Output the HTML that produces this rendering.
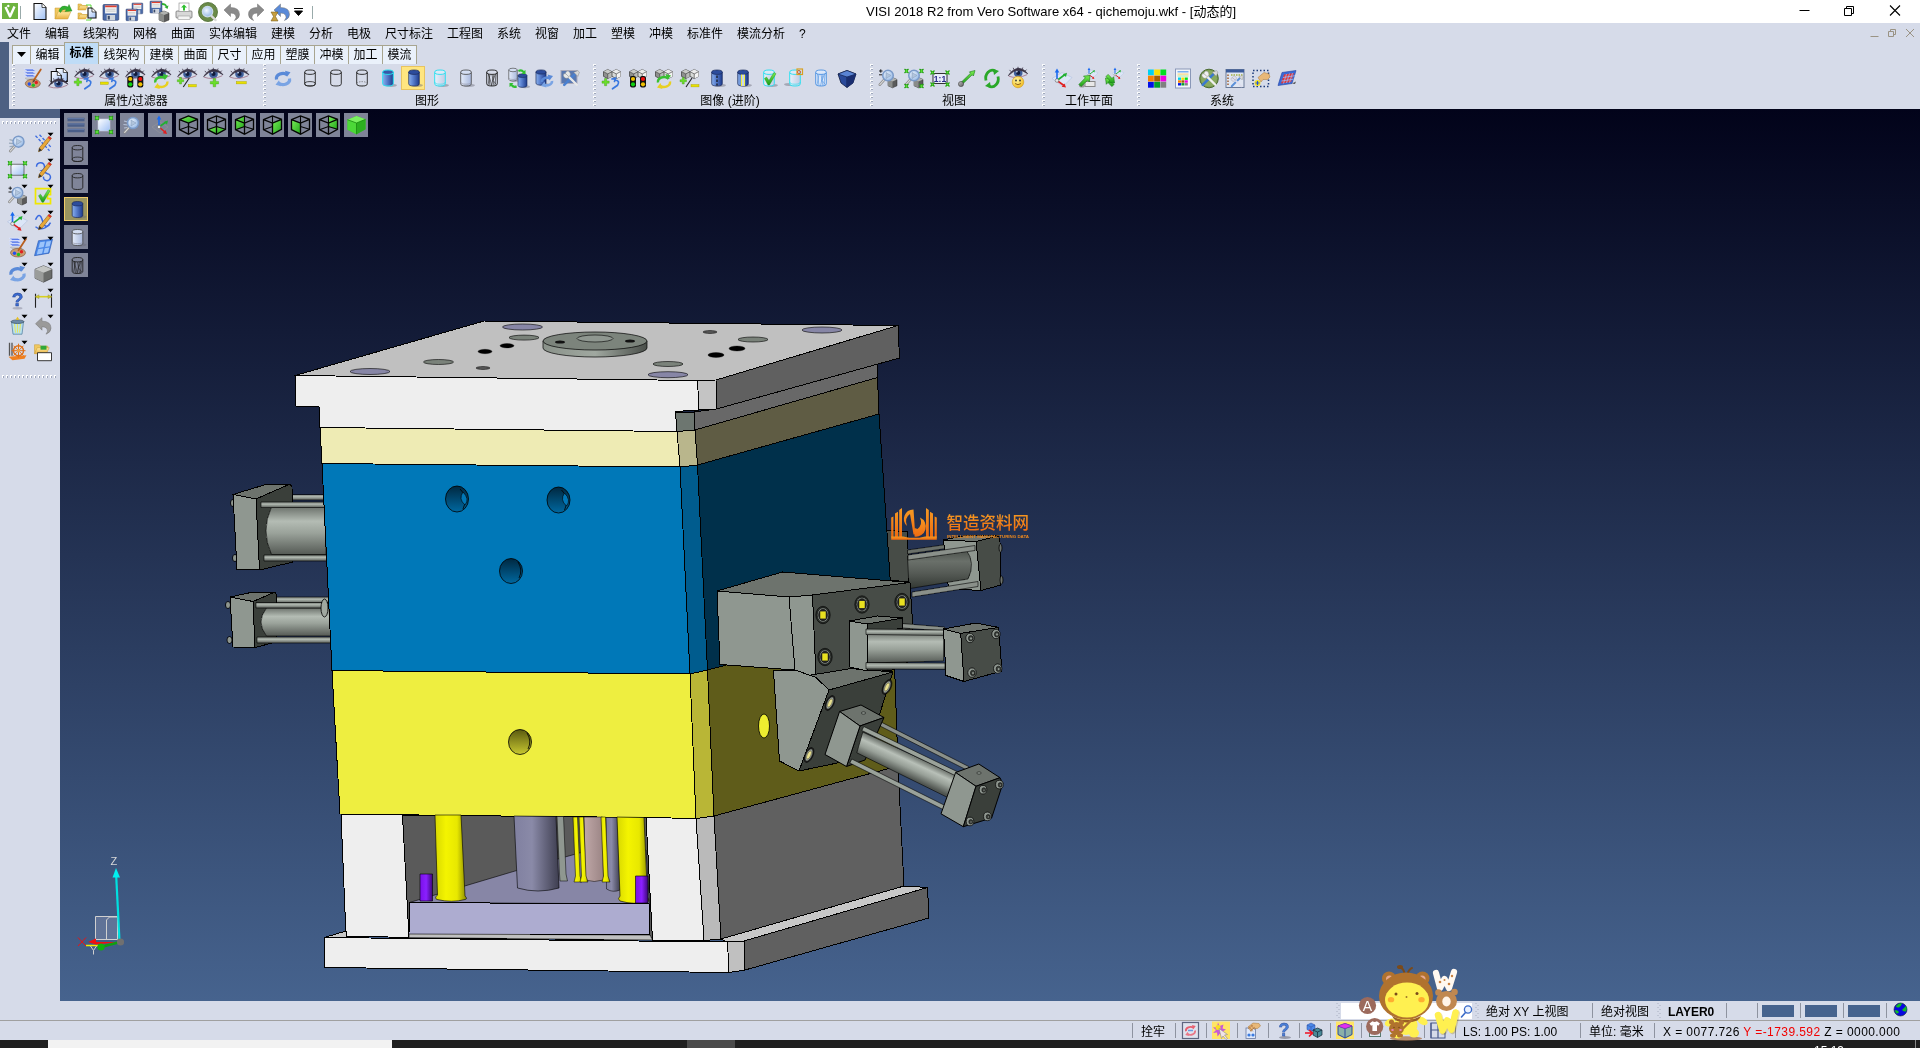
<!DOCTYPE html>
<html lang="zh-CN">
<head>
<meta charset="utf-8">
<title>VISI 2018 R2 from Vero Software x64 - qichemoju.wkf - [动态的]</title>
<style>
html,body{margin:0;padding:0}
body{width:1920px;height:1048px;overflow:hidden;position:relative;background:#d6dbe9;
 font-family:"Liberation Sans","Noto Sans CJK SC",sans-serif;font-size:12px;color:#000}
.abs{position:absolute}
#titlebar{position:absolute;left:0;top:0;width:1920px;height:23px;background:#fff}
#title{position:absolute;left:866px;top:4px;font-size:13px;line-height:16px;white-space:nowrap;color:#000;letter-spacing:0.03px}
#menubar{position:absolute;left:0;top:23px;width:1920px;height:20px;background:#d6dbe9}
#menubar span{position:absolute;top:2.5px;line-height:16px;font-size:12px;white-space:nowrap}
#darkstrip{position:absolute;left:0;top:42px;width:60px;height:76px;background:#4d6082}
#ribbon{position:absolute;left:9px;top:42px;width:1911px;height:67px;background:#d6dbe9}
.tab{position:absolute;top:45px;height:19px;box-sizing:border-box;border:1px solid #a8a590;border-bottom:none;background:#eaf1fb;
 font-size:12px;line-height:16px;text-align:center;white-space:nowrap;padding-top:.5px}
.tab.sel{top:42px;height:22px;background:#bfdcf7;font-weight:bold;padding-top:1.5px;border-color:#a8a590}
.grip{position:absolute;top:64px;width:3px;height:43px;
 background-image:repeating-linear-gradient(to bottom,#fff 0,#fff 2px,transparent 2px,transparent 4px);opacity:.9}
.grip:after{content:"";position:absolute;left:1px;top:1px;width:2px;height:43px;
 background-image:repeating-linear-gradient(to bottom,#9aa3b8 0,#9aa3b8 1px,transparent 1px,transparent 4px);}
.glabel{position:absolute;top:94px;font-size:12px;line-height:15px;white-space:nowrap;transform:translateX(-50%)}
#viewport{position:absolute;left:60px;top:109px;width:1860px;height:892px;
 background:linear-gradient(to bottom,#02031a 0%,#46638e 100%)}
#leftbar{position:absolute;left:0;top:118px;width:60px;height:883px;background:#d6dbe9}
.hgrip{position:absolute;left:2px;width:56px;height:3px;
 background-image:repeating-linear-gradient(to right,#fff 0,#fff 2px,transparent 2px,transparent 4px)}
.hgrip:after{content:"";position:absolute;left:1px;top:1px;width:56px;height:2px;
 background-image:repeating-linear-gradient(to right,#9aa3b8 0,#9aa3b8 1px,transparent 1px,transparent 4px)}
#status1,#status2{position:absolute;left:0;width:1920px;background:#d6dbe9}
#status1{top:1001px;height:19px}
#status2{top:1020px;height:20px;border-top:1px solid #a0a0a0;box-sizing:border-box}
.st{position:absolute;font-size:12px;line-height:15px;white-space:nowrap}
.vsep{position:absolute;width:1px;background:#8e93a0}
#taskbar{position:absolute;left:0;top:1040px;width:1920px;height:8px;background:#1f1f1f}
.vbtn{position:absolute;width:24px;height:24px;background:#7f8499;box-sizing:border-box}
svg{position:absolute;overflow:visible}
</style>
</head>
<body>
<div id="titlebar"></div>
<div id="title">VISI 2018 R2 from Vero Software x64 - qichemoju.wkf - [动态的]</div>
<div id="menubar">
<span style="left:7px">文件</span>
<span style="left:45px">编辑</span>
<span style="left:83px">线架构</span>
<span style="left:133px">网格</span>
<span style="left:171px">曲面</span>
<span style="left:209px">实体编辑</span>
<span style="left:271px">建模</span>
<span style="left:309px">分析</span>
<span style="left:347px">电极</span>
<span style="left:385px">尺寸标注</span>
<span style="left:447px">工程图</span>
<span style="left:497px">系统</span>
<span style="left:535px">视窗</span>
<span style="left:573px">加工</span>
<span style="left:611px">塑模</span>
<span style="left:649px">冲模</span>
<span style="left:687px">标准件</span>
<span style="left:737px">模流分析</span>
<span style="left:799px">?</span>
</div>
<div id="darkstrip"></div><div id="ribbon"></div>
<div class="tab" style="left:12px;width:19px"><svg style="left:4px;top:6px" width="9" height="5"><path d="M0 0h9l-4.5 5z" fill="#000"/></svg></div>
<div class="tab" style="left:30px;width:35px">编辑</div>
<div class="tab sel" style="left:64px;width:35px">标准</div>
<div class="tab" style="left:98px;width:47px">线架构</div>
<div class="tab" style="left:144px;width:35px">建模</div>
<div class="tab" style="left:178px;width:35px">曲面</div>
<div class="tab" style="left:212px;width:35px">尺寸</div>
<div class="tab" style="left:246px;width:35px">应用</div>
<div class="tab" style="left:280px;width:35px">塑膜</div>
<div class="tab" style="left:314px;width:35px">冲模</div>
<div class="tab" style="left:348px;width:35px">加工</div>
<div class="tab" style="left:382px;width:35px">模流</div>
<div class="grip" style="left:12px"></div>
<div class="grip" style="left:263px"></div>
<div class="grip" style="left:593px"></div>
<div class="grip" style="left:870px"></div>
<div class="grip" style="left:1042px"></div>
<div class="grip" style="left:1137px"></div>
<div class="glabel" style="left:136px">属性/过滤器</div>
<div class="glabel" style="left:427px">图形</div>
<div class="glabel" style="left:730px">图像 (进阶)</div>
<div class="glabel" style="left:954px">视图</div>
<div class="glabel" style="left:1089px">工作平面</div>
<div class="glabel" style="left:1222px">系统</div>
<svg style="left:0;top:0" width="1920" height="44" viewBox="0 0 1920 44" fill="none" stroke="#000" stroke-width="1">
<path d="M1799.5 10.5h10" />
<path d="M1844.5 8.5h7v7h-7z M1846.5 8.5v-2h7v7h-2" />
<path d="M1890 5.5l10 10 M1900 5.5l-10 10" stroke-width="1.1"/>
<g stroke="#9a9384"><path d="M1870.5 36.5h8"/><path d="M1888.5 31.500h5v5h-5z M1890.5 31.5v-2h5v5h-2"/><path d="M1906 29l8 8 M1914 29l-8 8"/></g>
</svg>
<div id="viewport"></div>
<div id="leftbar"><div class="hgrip" style="top:3px"></div><div class="hgrip" style="top:257px"></div></div>
<div id="status1"></div><div id="status2"></div>
<div class="abs" style="left:1341px;top:1003px;width:131px;height:16px;background:#fff"></div>
<div class="st" style="left:1486px;top:1005px">绝对 XY 上视图</div>
<div class="st" style="left:1601px;top:1005px">绝对视图</div>
<div class="st" style="left:1668px;top:1005px;font-weight:bold">LAYER0</div>
<div class="vsep" style="left:1592px;top:1003px;height:15px"></div>
<div class="vsep" style="left:1726px;top:1003px;height:15px"></div>
<div class="vsep" style="left:1757px;top:1003px;height:15px"></div>
<div class="vsep" style="left:1800px;top:1003px;height:15px"></div>
<div class="vsep" style="left:1843px;top:1003px;height:15px"></div>
<div class="vsep" style="left:1886px;top:1003px;height:15px"></div>
<div class="abs" style="left:1762px;top:1005px;width:32px;height:12px;background:#46638e"></div>
<div class="abs" style="left:1805px;top:1005px;width:32px;height:12px;background:#46638e"></div>
<div class="abs" style="left:1848px;top:1005px;width:32px;height:12px;background:#46638e"></div>
<div class="st" style="left:1141px;top:1025px">拴牢</div>
<div class="st" style="left:1463px;top:1025px">LS: 1.00 PS: 1.00</div>
<div class="st" style="left:1589px;top:1025px">单位: 毫米</div>
<div class="st" style="left:1663px;top:1025px;letter-spacing:.42px">X = 0077.726 <span style="color:#f00000">Y =-1739.592</span> Z = 0000.000</div>
<div class="vsep" style="left:1132px;top:1023px;height:15px"></div>
<div class="vsep" style="left:1175px;top:1023px;height:15px"></div>
<div class="vsep" style="left:1206px;top:1023px;height:15px"></div>
<div class="vsep" style="left:1237px;top:1023px;height:15px"></div>
<div class="vsep" style="left:1268px;top:1023px;height:15px"></div>
<div class="vsep" style="left:1299px;top:1023px;height:15px"></div>
<div class="vsep" style="left:1330px;top:1023px;height:15px"></div>
<div class="vsep" style="left:1361px;top:1023px;height:15px"></div>
<div class="vsep" style="left:1424px;top:1023px;height:15px"></div>
<div class="vsep" style="left:1455px;top:1023px;height:15px"></div>
<div class="vsep" style="left:1580px;top:1023px;height:15px"></div>
<div class="vsep" style="left:1654px;top:1023px;height:15px"></div>
<div id="taskbar"><div class="abs" style="left:48px;top:0;width:344px;height:8px;background:#f2f2f2"></div><div class="abs" style="left:687px;top:0;width:48px;height:8px;background:#4a4a4a"></div><div class="abs" style="left:1814px;top:5.5px;color:#fff;font-size:12px;line-height:11px">15:19</div><div class="abs" style="left:1915px;top:0;width:1px;height:8px;background:#888"></div></div>
<svg style="left:0;top:0" width="1920" height="1048" viewBox="0 0 1920 1048" stroke-linejoin="round">
<defs>
<linearGradient id="cylV" x1="0" y1="0" x2="0" y2="1"><stop offset="0" stop-color="#6c726c"/><stop offset=".3" stop-color="#b4bcb4"/><stop offset=".55" stop-color="#9aa29a"/><stop offset="1" stop-color="#555a55"/></linearGradient>
<linearGradient id="cylVd" x1="0" y1="0" x2="0" y2="1"><stop offset="0" stop-color="#4a4f4a"/><stop offset=".3" stop-color="#6a706a"/><stop offset=".6" stop-color="#565b56"/><stop offset="1" stop-color="#333833"/></linearGradient>
<linearGradient id="rodV" x1="0" y1="0" x2="0" y2="1"><stop offset="0" stop-color="#7a807a"/><stop offset=".4" stop-color="#b0b8b0"/><stop offset="1" stop-color="#5a5f5a"/></linearGradient>
<linearGradient id="pilY" x1="0" y1="0" x2="1" y2="0"><stop offset="0" stop-color="#d8d800"/><stop offset=".35" stop-color="#f4f400"/><stop offset=".7" stop-color="#e8e800"/><stop offset="1" stop-color="#8a8a00"/></linearGradient>
<linearGradient id="pilG" x1="0" y1="0" x2="1" y2="0"><stop offset="0" stop-color="#8080a0"/><stop offset=".4" stop-color="#8a8aa8"/><stop offset="1" stop-color="#3e3e50"/></linearGradient>
<linearGradient id="pilP" x1="0" y1="0" x2="1" y2="0"><stop offset="0" stop-color="#7a10e8"/><stop offset=".5" stop-color="#8a20ff"/><stop offset="1" stop-color="#3c0878"/></linearGradient>
<linearGradient id="pilK" x1="0" y1="0" x2="1" y2="0"><stop offset="0" stop-color="#c0a8a8"/><stop offset="1" stop-color="#9a8484"/></linearGradient>
<linearGradient id="holeB" x1="0" y1="0" x2="0" y2="1"><stop offset="0" stop-color="#002840"/><stop offset="1" stop-color="#0068a0"/></linearGradient>
<linearGradient id="holeY" x1="0" y1="0" x2="0" y2="1"><stop offset="0" stop-color="#5a5a10"/><stop offset="1" stop-color="#c8c830"/></linearGradient>
<linearGradient id="flg" x1="0" y1="0" x2="1" y2="0"><stop offset="0" stop-color="#8a928a"/><stop offset=".5" stop-color="#a0a8a0"/><stop offset="1" stop-color="#4a4f4a"/></linearGradient>
<linearGradient id="logoG" x1="0" y1="0" x2="0" y2="1"><stop offset="0" stop-color="#f59a23"/><stop offset="1" stop-color="#ee6a10"/></linearGradient>
</defs>
<g shape-rendering="crispEdges">
<rect x="286" y="494.5" width="38" height="5.5" fill="url(#rodV)" stroke="#000" stroke-width=".6"/>
<polygon points="256,499 290,484 292,487 293,562 259.5,570" fill="#3a3f3a" stroke="#000" stroke-width="1" />
<polygon points="233,494.5 264,485 290,484 256,499" fill="#6d736d" stroke="#000" stroke-width="1" />
<path d="M271.5 507H326V554.5H271.5Q260.5 530.75 271.5 507z" fill="url(#cylV)" stroke="#000" stroke-width=".6"/>
<rect x="261" y="502" width="64" height="5.5" fill="url(#rodV)" stroke="#000" stroke-width=".6"/>
<rect x="264" y="555" width="63" height="6" fill="url(#rodV)" stroke="#000" stroke-width=".6"/>
<ellipse cx="233" cy="503" rx="2.5" ry="3.5" fill="#8f9790" stroke="#000" stroke-width="0.8" />
<ellipse cx="235" cy="558" rx="2.5" ry="3.5" fill="#8f9790" stroke="#000" stroke-width="0.8" />
<polygon points="233,494.5 256,499 259.5,570 237,569.5" fill="#8f9790" stroke="#000" stroke-width="1" />
<rect x="272" y="597" width="58" height="6" fill="url(#rodV)" stroke="#000" stroke-width=".6"/>
<polygon points="253,601.5 275,592 276.5,595 276,642 255,647.5" fill="#3a3f3a" stroke="#000" stroke-width="1" />
<polygon points="230,597 248.5,593 275,592 253,601.5" fill="#6d736d" stroke="#000" stroke-width="1" />
<path d="M266.5 608H332V636H266.5Q255.5 622.0 266.5 608z" fill="url(#cylV)" stroke="#000" stroke-width=".6"/>
<rect x="256" y="602.5" width="75" height="5.5" fill="url(#rodV)" stroke="#000" stroke-width=".6"/>
<rect x="257" y="637" width="76" height="6" fill="url(#rodV)" stroke="#000" stroke-width=".6"/>
<ellipse cx="228" cy="605" rx="2.5" ry="3.5" fill="#8f9790" stroke="#000" stroke-width="0.8" />
<ellipse cx="229.5" cy="640" rx="2.5" ry="3.5" fill="#8f9790" stroke="#000" stroke-width="0.8" />
<polygon points="230,597 253,601.5 255,647.5 233,647" fill="#8f9790" stroke="#000" stroke-width="1" />
<ellipse cx="324.5" cy="608" rx="3.5" ry="9" fill="#a0a8a0" stroke="#000" stroke-width="0.8" />
<polygon points="886,530 907.5,532 909,582 888,580" fill="#474c47" stroke="#000" stroke-width="1" />
<polygon points="907.5,550 950,544 950,548 907.5,554" fill="#6a706a" stroke="#000" stroke-width="0.6" />
<polygon points="943.5,540 976,541.5 981,590.5 948.5,588.7" fill="#8f9790" stroke="#000" stroke-width="1" />
<path d="M907.500 556L966 549.500Q976 563 968 579L909 588.700z" fill="url(#cylVd)" stroke="#000" stroke-width=".6"/>
<polygon points="908,555 975,545.5 975,550.5 908,560" fill="#8a908a" stroke="#000" stroke-width="0.6" />
<polygon points="912,592 978,581.5 978,586.5 912,597" fill="#8a908a" stroke="#000" stroke-width="0.6" />
<polygon points="943.5,540 968,535 998.5,536 976,541.5" fill="#6d736d" stroke="#000" stroke-width="1" />
<polygon points="976,541.5 998.5,536 1000,542 1001,585 981,590.5" fill="#474c47" stroke="#000" stroke-width="1" />
<ellipse cx="1000.5" cy="548" rx="1.5" ry="4" fill="#6d736d" stroke="#000" stroke-width="0.8" />
<ellipse cx="1001.5" cy="580" rx="1.5" ry="4" fill="#6d736d" stroke="#000" stroke-width="0.8" />
<polygon points="694,412 716.5,409 877.5,364 877.5,377.5 695,430" fill="#686868" stroke="#000" stroke-width="1" />
<polygon points="295,375.5 484,321 898,325.5 716,380 697.5,380.5" fill="#c0c0c0" stroke="#000" stroke-width="1" />
<polygon points="716,380 898,325.5 899.5,358 716.5,409" fill="#606060" stroke="#000" stroke-width="1" />
<polygon points="697.5,380.5 716,380 716.5,409 699,410" fill="#c4c4c4" stroke="#000" stroke-width="1" />
<polygon points="295,375.5 697.5,380.5 699,410 675.5,411.5 677,431.5 320,427.5 319,407 296,406" fill="#eeeeee" stroke="#000" stroke-width="1" />
<polygon points="675.5,412 694,412 695,430 677,431.5" fill="#6d7670" stroke="#000" stroke-width="1" />
<polygon points="320,427.5 677,431.5 680,467 322,463.5" fill="#eeebb4" stroke="#000" stroke-width="1" />
<polygon points="677,431.5 695,430 697.5,465 680,467" fill="#b9b68c" stroke="#000" stroke-width="1" />
<polygon points="695,430 877.5,377.5 879,414 697.5,465" fill="#5f5c44" stroke="#000" stroke-width="1" />
<polygon points="322,463.5 680,467 690,674 332,670.5" fill="#0078b8" stroke="#000" stroke-width="1" />
<polygon points="680,467 697.5,465 707.5,670 690,674" fill="#005c8e" stroke="#000" stroke-width="1" />
<polygon points="697.5,465 879,414 893,621 707.5,670" fill="#00304b" stroke="#000" stroke-width="1" />
<polygon points="332,670.5 690,674 696,818.5 340,814" fill="#eeee40" stroke="#000" stroke-width="1" />
<polygon points="690,674 707.5,670 714,816 696,818.5" fill="#b9b636" stroke="#000" stroke-width="1" />
<polygon points="707.5,670 893,621 898,766 714,816" fill="#5f5c1a" stroke="#000" stroke-width="1" />
<polygon points="714,816 898,766 904,886 721,939" fill="#606060" stroke="#000" stroke-width="1" />
<polygon points="402.5,815 646,817.5 652.5,940 409,937.5" fill="#5a5a5a" stroke="#000" stroke-width="1" />
</g>
<g>
<polygon points="409.5,902.5 515,871 590,850 646,850 649.5,904" fill="#8786a6" stroke="#000" stroke-width="0.6" />
<path d="M606 817.500L617.5 817.500L620 890Q613 893 606.500 889z" fill="url(#pilG)" stroke="#000" stroke-width=".5"/>
<path d="M584 817L602.500 817L603.500 880Q594 883 585.500 880z" fill="url(#pilK)" stroke="#000" stroke-width=".5"/>
<path d="M557 816.500L563.500 816.500L566 874L567.500 881L560 881L559.500 874z" fill="#8f9790" stroke="#000" stroke-width=".5"/>
<path d="M573 817L577.5 817L580 876L582 882L574 882L575.5 876z" fill="url(#pilY)" stroke="#000" stroke-width=".5"/>
<path d="M579 817L583.5 817L586 876L588 882L580 882L581.5 876z" fill="url(#pilY)" stroke="#000" stroke-width=".5"/>
<path d="M601 817L605.5 817L608 876L610 882L602 882L603.5 876z" fill="url(#pilY)" stroke="#000" stroke-width=".5"/>
<path d="M514 816L556 816.500L559 888Q538 894 517.500 888z" fill="url(#pilG)" stroke="#000" stroke-width=".6"/>
<path d="M435 815L461 815L465 896Q468 899 465 899.500Q452 903 437 899.500Q434 898 437.500 895z" fill="url(#pilY)" stroke="#000" stroke-width=".6"/>
<path d="M617 817L644 817.500L647.500 897Q650 901 647.500 902Q634 905 620 901Q617 899 620 896z" fill="url(#pilY)" stroke="#000" stroke-width=".6"/>
<rect x="420" y="874" width="12.500" height="27" fill="url(#pilP)" stroke="#000" stroke-width=".6"/>
<rect x="635.500" y="876" width="12.500" height="27" fill="url(#pilP)" stroke="#000" stroke-width=".6"/>
</g>
<g shape-rendering="crispEdges">
<polygon points="409.5,902.5 649.5,904 650,935 409,934" fill="#adacd0" stroke="#000" stroke-width="1" />
<polygon points="409,934 650,935 652.5,940 409,937.5" fill="#c0c0c0" stroke="#000" stroke-width="0.6" />
<polygon points="341,814 402.5,815 409,937.5 346,936" fill="#eeeeee" stroke="#000" stroke-width="1" />
<polygon points="646,817.5 696,818.5 704,940.5 652.5,940" fill="#eeeeee" stroke="#000" stroke-width="1" />
<polygon points="696,818.5 714,816 721,939 704,940.5" fill="#bababa" stroke="#000" stroke-width="1" />
<polygon points="721,939 904,886 927.5,887.5 744,941 726,941.5" fill="#c8c8c8" stroke="#000" stroke-width="1" />
<polygon points="324.5,937.5 346,931 346,937.7" fill="#c8c8c8" stroke="#000" stroke-width="1" />
<polygon points="324.5,937.5 727.5,942 729,972.5 325,967.5" fill="#eeeeee" stroke="#000" stroke-width="1" />
<polygon points="727.5,942 744,941 745,970 729,972.5" fill="#c0c0c0" stroke="#000" stroke-width="1" />
<polygon points="744,941 927.5,887.5 929,918 745,970" fill="#606060" stroke="#000" stroke-width="1" />
</g>
<g>
<ellipse cx="457" cy="499" rx="11.5" ry="13" fill="url(#holeB)" stroke="#000" stroke-width="0.8" />
<path d="M460 489q9 8 3 20" fill="none" stroke="#000" stroke-width=".8"/>
<path d="M463 492q-5 7 2 13q5 -6 -2 -13z" fill="#0078b8" stroke="#000" stroke-width=".6"/>
<ellipse cx="558.5" cy="500" rx="11.5" ry="13" fill="url(#holeB)" stroke="#000" stroke-width="0.8" />
<path d="M561.5 490q9 8 3 20" fill="none" stroke="#000" stroke-width=".8"/>
<path d="M564.5 493q-5 7 2 13q5 -6 -2 -13z" fill="#0078b8" stroke="#000" stroke-width=".6"/>
<ellipse cx="511" cy="571" rx="11.5" ry="12.5" fill="url(#holeB)" stroke="#000" stroke-width="0.8" />
<path d="M518 562q5 8 1 16" fill="none" stroke="#000" stroke-width=".8"/>
<ellipse cx="520" cy="742" rx="11.5" ry="12.5" fill="url(#holeY)" stroke="#000" stroke-width="0.8" />
<path d="M527 733q5 8 1 16" fill="none" stroke="#000" stroke-width=".8"/>
<ellipse cx="764" cy="726" rx="5.5" ry="12" fill="#eeee30" stroke="#000" stroke-width="0.8" />
<ellipse cx="522.5" cy="327" rx="20" ry="3" fill="#8786a6" stroke="#000" stroke-width="0.6" />
<ellipse cx="370" cy="371.5" rx="20" ry="3" fill="#8786a6" stroke="#000" stroke-width="0.6" />
<ellipse cx="822" cy="330" rx="20" ry="3" fill="#8786a6" stroke="#000" stroke-width="0.6" />
<ellipse cx="668" cy="374.7" rx="20" ry="3" fill="#8786a6" stroke="#000" stroke-width="0.6" />
<ellipse cx="524" cy="337.6" rx="15" ry="2.5" fill="#7a827a" stroke="#000" stroke-width="0.6" />
<ellipse cx="438.5" cy="362" rx="15" ry="2.5" fill="#7a827a" stroke="#000" stroke-width="0.6" />
<ellipse cx="753" cy="339.5" rx="15" ry="2.5" fill="#7a827a" stroke="#000" stroke-width="0.6" />
<ellipse cx="668" cy="364" rx="15" ry="2.5" fill="#7a827a" stroke="#000" stroke-width="0.6" />
<ellipse cx="507" cy="345.7" rx="7" ry="2.2" fill="#000" stroke="#000" stroke-width="0.3" />
<ellipse cx="485" cy="351.5" rx="7" ry="2.2" fill="#000" stroke="#000" stroke-width="0.3" />
<ellipse cx="737" cy="348.5" rx="8" ry="2.5" fill="#000" stroke="#000" stroke-width="0.3" />
<ellipse cx="716" cy="355" rx="8" ry="2.5" fill="#000" stroke="#000" stroke-width="0.3" />
<ellipse cx="483" cy="368" rx="7" ry="1.5" fill="#555" stroke="#000" stroke-width="0.5" />
<ellipse cx="710" cy="332" rx="7" ry="1.5" fill="#555" stroke="#000" stroke-width="0.5" />
<path d="M543 341v7a52 9 0 0 0 104 0v-7z" fill="url(#flg)" stroke="#000" stroke-width=".7"/>
<ellipse cx="595" cy="341" rx="52" ry="9" fill="#7c847c" stroke="#000" stroke-width="0.7" />
<ellipse cx="595" cy="338.5" rx="18" ry="3.5" fill="#8f9790" stroke="#000" stroke-width="0.6" />
<ellipse cx="560" cy="342" rx="5" ry="1.6" fill="#111" stroke="#000" stroke-width="0" />
<ellipse cx="630" cy="341" rx="5" ry="1.6" fill="#111" stroke="#000" stroke-width="0" />
</g>
<g shape-rendering="crispEdges">
<polygon points="717,591 782.5,572 910,582.5 812.5,595 789,597" fill="#6d736d" stroke="#000" stroke-width="1" />
<polygon points="717,591 789,597 795,670 720,664.5" fill="#8f9790" stroke="#000" stroke-width="1" />
<polygon points="789,597 812.5,595 816,677.5 795,670" fill="#8f9790" stroke="#000" stroke-width="1" />
<polygon points="812.5,595 910,582.5 912.5,622 912,660 892.5,670 816,677.5" fill="#474c47" stroke="#000" stroke-width="1" />
<polygon points="805,676 851,668.6 893,672 829,690" fill="#6d736d" stroke="#000" stroke-width="1" />
<polygon points="773.4,670 795,670 816,677.5 829,690 799,771 779.5,761" fill="#8f9790" stroke="#000" stroke-width="1" />
<polygon points="829,690 893,672 866,757 799,771" fill="#3a3f3a" stroke="#000" stroke-width="1" />
</g><g>
<ellipse cx="823" cy="615" rx="7.2" ry="8.7" fill="#2c302c" stroke="#000" stroke-width="0.6" />
<ellipse cx="823" cy="615" rx="5.8" ry="7.3" fill="#8f9790" stroke="#000" stroke-width="0.6" />
<ellipse cx="823" cy="615" rx="4.5" ry="6.0" fill="#222" stroke="#000" stroke-width="0.4" />
<rect x="820.25" y="611.425" width="5.5" height="7.15" fill="#e8e020"/>
<ellipse cx="862" cy="604.5" rx="7.2" ry="8.7" fill="#2c302c" stroke="#000" stroke-width="0.6" />
<ellipse cx="862" cy="604.5" rx="5.8" ry="7.3" fill="#8f9790" stroke="#000" stroke-width="0.6" />
<ellipse cx="862" cy="604.5" rx="4.5" ry="6.0" fill="#222" stroke="#000" stroke-width="0.4" />
<rect x="859.25" y="600.925" width="5.5" height="7.15" fill="#e8e020"/>
<ellipse cx="902" cy="602" rx="7.2" ry="8.7" fill="#2c302c" stroke="#000" stroke-width="0.6" />
<ellipse cx="902" cy="602" rx="5.8" ry="7.3" fill="#8f9790" stroke="#000" stroke-width="0.6" />
<ellipse cx="902" cy="602" rx="4.5" ry="6.0" fill="#222" stroke="#000" stroke-width="0.4" />
<rect x="899.25" y="598.425" width="5.5" height="7.15" fill="#e8e020"/>
<ellipse cx="825" cy="657" rx="7.2" ry="8.7" fill="#2c302c" stroke="#000" stroke-width="0.6" />
<ellipse cx="825" cy="657" rx="5.8" ry="7.3" fill="#8f9790" stroke="#000" stroke-width="0.6" />
<ellipse cx="825" cy="657" rx="4.5" ry="6.0" fill="#222" stroke="#000" stroke-width="0.4" />
<rect x="822.25" y="653.425" width="5.5" height="7.15" fill="#e8e020"/>
<g transform="rotate(25 830 703)">
<ellipse cx="830" cy="703" rx="4" ry="8" fill="#222" stroke="#000" stroke-width="0.5" />
<ellipse cx="830" cy="703" rx="3" ry="6.5" fill="#9aa29a" stroke="#000" stroke-width="0.4" />
<ellipse cx="830" cy="703" rx="1.8" ry="4.5" fill="#e8e090" stroke="#000" stroke-width="0.3" />
</g>
<g transform="rotate(25 887 687)">
<ellipse cx="887" cy="687" rx="4" ry="8" fill="#222" stroke="#000" stroke-width="0.5" />
<ellipse cx="887" cy="687" rx="3" ry="6.5" fill="#9aa29a" stroke="#000" stroke-width="0.4" />
<ellipse cx="887" cy="687" rx="1.8" ry="4.5" fill="#e8e090" stroke="#000" stroke-width="0.3" />
</g>
<g transform="rotate(25 809 755)">
<ellipse cx="809" cy="755" rx="4" ry="8" fill="#222" stroke="#000" stroke-width="0.5" />
<ellipse cx="809" cy="755" rx="3" ry="6.5" fill="#9aa29a" stroke="#000" stroke-width="0.4" />
<ellipse cx="809" cy="755" rx="1.8" ry="4.5" fill="#e8e090" stroke="#000" stroke-width="0.3" />
</g>
</g><g shape-rendering="crispEdges">
<polygon points="896,623 944.5,627 944.5,631 896,627.5" fill="#8a908a" stroke="#000" stroke-width="0.6" />
<polygon points="849,621 877.5,616 902.5,618 867.5,624" fill="#6d736d" stroke="#000" stroke-width="1" />
<polygon points="867.5,624 902.5,618 903,628 868,634" fill="#3a3f3a" stroke="#000" stroke-width="1" />
<path d="M866 634Q858 648 867 663L943.500 661L943.500 632.500z" fill="url(#cylV)" stroke="#000" stroke-width=".6"/>
<polygon points="849,621 867.5,624 867.5,671 850,667" fill="#8f9790" stroke="#000" stroke-width="1" />
<polygon points="866,629 943.5,630 943.5,635.5 866,634.5" fill="url(#rodV)" stroke="#000" stroke-width="0.6" />
<polygon points="866,662.5 945,663 945,669.5 866,669" fill="url(#rodV)" stroke="#000" stroke-width="0.6" />
<polygon points="943.5,629 976,623 998.5,627.4 960.7,633.4" fill="#6d736d" stroke="#000" stroke-width="1" />
<polygon points="943.5,629 960.7,633.4 964,681.5 946,675.5" fill="#8f9790" stroke="#000" stroke-width="1" />
<polygon points="960.7,633.4 998.5,627.4 1002,671 964,681.5" fill="#474c47" stroke="#000" stroke-width="1" />
</g><g>
<ellipse cx="970" cy="638" rx="4.2" ry="4.7" fill="#8f9790" stroke="#000" stroke-width="0.7" />
<ellipse cx="970.8" cy="638.3" rx="2.4000000000000004" ry="2.7" fill="#3a3f3a" stroke="#000" stroke-width="0.5" />
<ellipse cx="971" cy="638.5" rx="1.2000000000000002" ry="1.4000000000000004" fill="#9aa29a" stroke="#000" stroke-width="0.3" />
<ellipse cx="996" cy="634" rx="4.2" ry="4.7" fill="#8f9790" stroke="#000" stroke-width="0.7" />
<ellipse cx="996.8" cy="634.3" rx="2.4000000000000004" ry="2.7" fill="#3a3f3a" stroke="#000" stroke-width="0.5" />
<ellipse cx="997" cy="634.5" rx="1.2000000000000002" ry="1.4000000000000004" fill="#9aa29a" stroke="#000" stroke-width="0.3" />
<ellipse cx="972" cy="672.6" rx="4.2" ry="4.7" fill="#8f9790" stroke="#000" stroke-width="0.7" />
<ellipse cx="972.8" cy="672.9" rx="2.4000000000000004" ry="2.7" fill="#3a3f3a" stroke="#000" stroke-width="0.5" />
<ellipse cx="973" cy="673.1" rx="1.2000000000000002" ry="1.4000000000000004" fill="#9aa29a" stroke="#000" stroke-width="0.3" />
<ellipse cx="997.7" cy="668.6" rx="4.2" ry="4.7" fill="#8f9790" stroke="#000" stroke-width="0.7" />
<ellipse cx="998.5" cy="668.9" rx="2.4000000000000004" ry="2.7" fill="#3a3f3a" stroke="#000" stroke-width="0.5" />
<ellipse cx="998.7" cy="669.1" rx="1.2000000000000002" ry="1.4000000000000004" fill="#9aa29a" stroke="#000" stroke-width="0.3" />
</g><g>
<linearGradient id="rodD" gradientUnits="userSpaceOnUse" x1="0" y1="0" x2="-2" y2="4.500" spreadMethod="reflect"><stop offset="0" stop-color="#b0b8b0"/><stop offset="1" stop-color="#5a5f5a"/></linearGradient>
<polygon points="877.1,724.5 967.1,770.2 968.9,766.6 878.9,720.9" fill="#8a908a" stroke="#000" stroke-width="0.6" />
<polygon points="839.6,711.5 861,705 884,717.5 860,726" fill="#6d736d" stroke="#000" stroke-width="1" />
<polygon points="860,726 884,717.5 878,731 865,760 846.5,766.5" fill="#3a3f3a" stroke="#000" stroke-width="1" />
<linearGradient id="cylD" gradientUnits="userSpaceOnUse" x1="905" y1="752" x2="896" y2="771.500"><stop offset="0" stop-color="#6c726c"/><stop offset=".3" stop-color="#b8c0b8"/><stop offset=".6" stop-color="#98a098"/><stop offset="1" stop-color="#505550"/></linearGradient>
<polygon points="862.8,732 955.5,775 947.8,797.5 856.8,752.8" fill="url(#cylD)" stroke="#000" stroke-width="0.6" />
<polygon points="861.8,730.5 956.0,776.0 958.0,772.0 863.8,726.5" fill="#9aa29a" stroke="#000" stroke-width="0.6" />
<polygon points="849.8,763.0 943.0,809.5 945.0,805.5 851.8,759.0" fill="#9aa29a" stroke="#000" stroke-width="0.6" />
<polygon points="839.6,711.5 860,726 846.5,766.5 825,754.5" fill="#8f9790" stroke="#000" stroke-width="1" />
<ellipse cx="863.5" cy="713" rx="2.2" ry="1.2" fill="#8f9790" stroke="#000" stroke-width="0.5" />
<polygon points="955.6,772.5 978.8,764 1000,777.7 976,786.3" fill="#6d736d" stroke="#000" stroke-width="1" />
<polygon points="955.6,772.5 976,786.3 963.3,826.7 941,813.8" fill="#8f9790" stroke="#000" stroke-width="1" />
<polygon points="976,786.3 1000,777.7 1002.8,783.7 991.6,818 963.3,826.7" fill="#3a3f3a" stroke="#000" stroke-width="1" />
<ellipse cx="979" cy="773" rx="2.2" ry="1.2" fill="#8f9790" stroke="#000" stroke-width="0.5" />
<ellipse cx="983" cy="789.7" rx="3.8" ry="4.3" fill="#8f9790" stroke="#000" stroke-width="0.7" />
<ellipse cx="983.8" cy="790.0" rx="1.9999999999999998" ry="2.3" fill="#3a3f3a" stroke="#000" stroke-width="0.5" />
<ellipse cx="984" cy="790.2" rx="0.7999999999999998" ry="1.0" fill="#9aa29a" stroke="#000" stroke-width="0.3" />
<ellipse cx="999.4" cy="784.6" rx="3.8" ry="4.3" fill="#8f9790" stroke="#000" stroke-width="0.7" />
<ellipse cx="1000.1999999999999" cy="784.9" rx="1.9999999999999998" ry="2.3" fill="#3a3f3a" stroke="#000" stroke-width="0.5" />
<ellipse cx="1000.4" cy="785.1" rx="0.7999999999999998" ry="1.0" fill="#9aa29a" stroke="#000" stroke-width="0.3" />
<ellipse cx="970" cy="821.5" rx="3.8" ry="4.3" fill="#8f9790" stroke="#000" stroke-width="0.7" />
<ellipse cx="970.8" cy="821.8" rx="1.9999999999999998" ry="2.3" fill="#3a3f3a" stroke="#000" stroke-width="0.5" />
<ellipse cx="971" cy="822.0" rx="0.7999999999999998" ry="1.0" fill="#9aa29a" stroke="#000" stroke-width="0.3" />
<ellipse cx="987.4" cy="816.4" rx="3.8" ry="4.3" fill="#8f9790" stroke="#000" stroke-width="0.7" />
<ellipse cx="988.1999999999999" cy="816.6999999999999" rx="1.9999999999999998" ry="2.3" fill="#3a3f3a" stroke="#000" stroke-width="0.5" />
<ellipse cx="988.4" cy="816.9" rx="0.7999999999999998" ry="1.0" fill="#9aa29a" stroke="#000" stroke-width="0.3" />
</g>
<g fill="url(#logoG)" stroke="none">
<path d="M891.200 517.500l2.200-1v21h-2.200zM895 513.500l3-1.800v25.800h-3zM899.200 510l2.800-2v29.500h-2.800z"/>
<path d="M936.800 517.500l-2.200-1v21h2.200zM933 513.500l-3-1.800v25.800h3zM928.800 510l-2.800-2v29.500h2.800z"/>
<path d="M891.200 536.500h12l6 1.200h10l6-1.200h11.600v3.200h-45.600z"/>
<path d="M913.500 509.600a9.500 9.500 0 0 0 -6.500 16.500q-3-8 3-12l3.500 20.500q4 0 6.500-3l-5-.5z"/>
<path d="M914.500 536.600a10 10 0 0 0 5.500-19q3 7-2.500 11.500l-3-1z"/>
</g>
<text x="946.500" y="528.800" font-family="'Liberation Sans','Noto Sans CJK SC',sans-serif" font-weight="500" font-size="17.500" fill="url(#logoG)" textLength="82.500" lengthAdjust="spacingAndGlyphs">智造资料网</text>
<text x="947" y="537.900" font-family="'Liberation Sans',sans-serif" font-weight="bold" font-size="4.400" fill="#f08a1d" textLength="82" lengthAdjust="spacingAndGlyphs">INTELLIGENT MANUFACTURING DATA</text>
<g>
<rect x="95.500" y="916.500" width="22" height="23" fill="#7a86a8" fill-opacity=".55" stroke="#d0d0d0" stroke-width="1"/>
<path d="M106.500 939v-19l3-3h8" fill="none" stroke="#d0d0d0" stroke-width="1"/>
<path d="M86 945.500h12" stroke="#f0f000" stroke-width="1.500"/>
<path d="M120 942l-24 0l0-3.500l-8 3.500l8 2.500z" fill="#f01010"/>
<path d="M120 942l-19 5" stroke="#10a010" stroke-width="2.500"/>
<circle cx="101" cy="947" r="3.600" fill="#10b010"/>
<path d="M119.500 941L116.200 876" stroke="#00e0e0" stroke-width="2.200"/>
<path d="M116 868l4 9.500h-7.500z" fill="#00f0f0"/>
<circle cx="120.500" cy="942" r="3.600" fill="#707070"/>
<text x="110.500" y="865" font-family="'Liberation Sans',sans-serif" font-size="11" fill="#d8d8d8">Z</text>
<path d="M78 937.500l8 8.500M86 937.500l-8 8.500" stroke="#f01010" stroke-width="1"/>
<path d="M90.500 946l3 4.500l3-4.500M93.500 950.500v4" stroke="#d0d0d0" stroke-width="1" fill="none"/>
</g>
</svg>
<svg style="left:0;top:0" width="1920" height="1048" viewBox="0 0 1920 1048">
<defs>
<linearGradient id="gcb" x1="0" y1="0" x2="1" y2="0"><stop offset="0" stop-color="#8ab0ea"/><stop offset=".35" stop-color="#5f86d4"/><stop offset="1" stop-color="#1c3a8c"/></linearGradient>
<linearGradient id="gcl" x1="0" y1="0" x2="1" y2="0"><stop offset="0" stop-color="#e4ecfa"/><stop offset="1" stop-color="#a8b8dc"/></linearGradient>
<linearGradient id="gcc" x1="0" y1="0" x2="1" y2="0"><stop offset="0" stop-color="#e8f0fa"/><stop offset="1" stop-color="#c0cce4"/></linearGradient>
<linearGradient id="gdoc" x1="0" y1="0" x2="1" y2="1"><stop offset="0" stop-color="#ffffff"/><stop offset="1" stop-color="#9fc0f4"/></linearGradient>
<radialGradient id="glens" cx=".4" cy=".4" r=".7"><stop offset="0" stop-color="#f0f6ff"/><stop offset="1" stop-color="#8ab0e0"/></radialGradient>
<linearGradient id="gfold" x1="0" y1="0" x2="0" y2="1"><stop offset="0" stop-color="#ffe9a0"/><stop offset="1" stop-color="#e8b040"/></linearGradient>
<linearGradient id="ggreen" x1="0" y1="0" x2="0" y2="1"><stop offset="0" stop-color="#7aee50"/><stop offset="1" stop-color="#1a9a18"/></linearGradient>
<linearGradient id="ggreen2" x1="0" y1="0" x2="1" y2="1"><stop offset="0" stop-color="#78ec58"/><stop offset="1" stop-color="#24a81c"/></linearGradient>
<linearGradient id="ggray" x1="0" y1="0" x2="1" y2="1"><stop offset="0" stop-color="#c0c0c0"/><stop offset="1" stop-color="#5a5a5a"/></linearGradient>
<radialGradient id="gsmile" cx=".4" cy=".35" r=".7"><stop offset="0" stop-color="#fff6a0"/><stop offset="1" stop-color="#f0b818"/></radialGradient>
</defs>
<g transform="translate(22.299999999999997 68.5) scale(1)"><path d="M1.500 .5h9l3.500 2.300h-9zM1.500 3.300h9l3.500 2.300h-9zM1.500 6.100h9l3.500 2.300h-9z" fill="#5a7ae8" stroke="#dfe6ff" stroke-width=".7"/><path d="M3 9.500h10l1.500 1.500h-10z" fill="#d8d8d8" stroke="#888" stroke-width=".4"/>
<ellipse cx="10.500" cy="15" rx="7.500" ry="4.300" fill="#c89a70" stroke="#7a5030" stroke-width=".6"/><circle cx="7" cy="15.500" r="1.700" fill="#2050f0"/><circle cx="11" cy="16.800" r="1.700" fill="#20c020"/><circle cx="14" cy="14" r="1.700" fill="#e02020"/>
<path d="M18.500 1L11 12.500" stroke="#b86020" stroke-width="1.800" stroke-linecap="round"/><path d="M11.800 11l-2 3.500l3-2z" fill="#444"/></g>
<g transform="translate(48.3 68.5) scale(1)"><path d="M8 0h7l4 4v9h-11z" fill="url(#gdoc)" stroke="#111" stroke-width="1.100"/><path d="M15 0v4h4" fill="#fff" stroke="#111" stroke-width=".7"/><path d="M3 3h6l4 4v8h-10z" fill="url(#gdoc)" stroke="#111" stroke-width="1.100"/><path d="M9 3v4h4" fill="#fff" stroke="#111" stroke-width=".7"/><g transform="translate(0 9.5) scale(1)"><path d="M.3 8.200Q9.500 -1 19.700 6.500Q15 10.800 9.500 10.300Q4 10.300 .3 8.200z" fill="#d4dbe8"/>
<circle cx="10.200" cy="5.400" r="4.300" fill="#40609c"/><circle cx="10.200" cy="5.400" r="2.100" fill="#121c3c"/><circle cx="8.700" cy="4" r="1" fill="#c8d8f0"/>
<path d="M.3 8.200Q4 2 10 .8Q16 1 19.700 6.300Q15 2.600 10 2.800Q5 3.200 .3 8.200z" fill="#3a3244" stroke="#3a3244" stroke-width=".7"/><path d="M3 4.200l-1.400-1.800M6 2.300l-.8-2M10 1.300V-.7M14 2l.8-2M17 3.700l1.500-1.600" stroke="#3a3244" stroke-width=".8"/>
<path d="M.8 8.700Q9 11.800 19 7.200" fill="none" stroke="#a87a90" stroke-width=".9"/></g></g>
<g transform="translate(74.3 68.5) scale(1)"><g transform="translate(0 0) scale(1)"><path d="M.3 8.200Q9.500 -1 19.700 6.500Q15 10.800 9.500 10.300Q4 10.300 .3 8.200z" fill="#d4dbe8"/>
<circle cx="10.200" cy="5.400" r="4.300" fill="#40609c"/><circle cx="10.200" cy="5.400" r="2.100" fill="#121c3c"/><circle cx="8.700" cy="4" r="1" fill="#c8d8f0"/>
<path d="M.3 8.200Q4 2 10 .8Q16 1 19.700 6.300Q15 2.600 10 2.800Q5 3.200 .3 8.200z" fill="#3a3244" stroke="#3a3244" stroke-width=".7"/><path d="M3 4.200l-1.400-1.800M6 2.300l-.8-2M10 1.300V-.7M14 2l.8-2M17 3.700l1.500-1.600" stroke="#3a3244" stroke-width=".8"/>
<path d="M.8 8.700Q9 11.800 19 7.200" fill="none" stroke="#a87a90" stroke-width=".9"/></g><path d="M0 12.5h2.5v-2.5h2.2v2.5h2.5v2.2h-2.5v2.5h-2.2v-2.5h-2.5z" fill="#6adf2a" stroke="#3e9a10" stroke-width=".4"/><path d="M10 10.5l3.500 -.8l-1 3.200M13 11.3q5.500 1 2.500 5.500l-5 3.500" fill="none" stroke="#3a78e0" stroke-width="1.700" stroke-linecap="round"/></g>
<g transform="translate(99.3 68.5) scale(1)"><g transform="translate(0 0) scale(1)"><path d="M.3 8.200Q9.500 -1 19.700 6.500Q15 10.800 9.500 10.300Q4 10.300 .3 8.200z" fill="#d4dbe8"/>
<circle cx="10.200" cy="5.400" r="4.300" fill="#40609c"/><circle cx="10.200" cy="5.400" r="2.100" fill="#121c3c"/><circle cx="8.700" cy="4" r="1" fill="#c8d8f0"/>
<path d="M.3 8.200Q4 2 10 .8Q16 1 19.700 6.300Q15 2.600 10 2.800Q5 3.200 .3 8.200z" fill="#3a3244" stroke="#3a3244" stroke-width=".7"/><path d="M3 4.200l-1.400-1.800M6 2.300l-.8-2M10 1.300V-.7M14 2l.8-2M17 3.700l1.500-1.600" stroke="#3a3244" stroke-width=".8"/>
<path d="M.8 8.700Q9 11.800 19 7.200" fill="none" stroke="#a87a90" stroke-width=".9"/></g><rect x="1" y="13.5" width="8" height="2.400" fill="#e8e000" stroke="#a8a000" stroke-width=".4"/><path d="M10 10.5l3.500 -.8l-1 3.200M13 11.3q5.500 1 2.500 5.500l-5 3.500" fill="none" stroke="#3a78e0" stroke-width="1.700" stroke-linecap="round"/></g>
<g transform="translate(125.30000000000001 68.5) scale(1)"><g transform="translate(0 0) scale(1)"><path d="M.3 8.200Q9.500 -1 19.700 6.500Q15 10.800 9.500 10.300Q4 10.300 .3 8.200z" fill="#d4dbe8"/>
<circle cx="10.200" cy="5.400" r="4.300" fill="#40609c"/><circle cx="10.200" cy="5.400" r="2.100" fill="#121c3c"/><circle cx="8.700" cy="4" r="1" fill="#c8d8f0"/>
<path d="M.3 8.200Q4 2 10 .8Q16 1 19.700 6.300Q15 2.600 10 2.800Q5 3.200 .3 8.200z" fill="#3a3244" stroke="#3a3244" stroke-width=".7"/><path d="M3 4.200l-1.400-1.800M6 2.300l-.8-2M10 1.300V-.7M14 2l.8-2M17 3.700l1.500-1.600" stroke="#3a3244" stroke-width=".8"/>
<path d="M.8 8.700Q9 11.800 19 7.200" fill="none" stroke="#a87a90" stroke-width=".9"/></g><rect x="2" y="7.5" width="6" height="11.500" rx="2" fill="#111"/><circle cx="5" cy="10.5" r="2.100" fill="#f0c000"/><circle cx="5" cy="15.8" r="2.100" fill="#10d010"/><rect x="12" y="7.5" width="6" height="11.500" rx="2" fill="#111"/><circle cx="15" cy="10.5" r="2.100" fill="#f01010"/><circle cx="15" cy="15.8" r="2.100" fill="#f0c000"/></g>
<g transform="translate(151.3 68.5) scale(1)"><g transform="translate(0 0) scale(1)"><path d="M.3 8.200Q9.500 -1 19.700 6.500Q15 10.800 9.500 10.300Q4 10.300 .3 8.200z" fill="#d4dbe8"/>
<circle cx="10.200" cy="5.400" r="4.300" fill="#40609c"/><circle cx="10.200" cy="5.400" r="2.100" fill="#121c3c"/><circle cx="8.700" cy="4" r="1" fill="#c8d8f0"/>
<path d="M.3 8.200Q4 2 10 .8Q16 1 19.700 6.300Q15 2.600 10 2.800Q5 3.200 .3 8.200z" fill="#3a3244" stroke="#3a3244" stroke-width=".7"/><path d="M3 4.200l-1.400-1.800M6 2.300l-.8-2M10 1.300V-.7M14 2l.8-2M17 3.700l1.500-1.600" stroke="#3a3244" stroke-width=".8"/>
<path d="M.8 8.700Q9 11.800 19 7.200" fill="none" stroke="#a87a90" stroke-width=".9"/></g><path d="M4 14a6 4.800000000000001 0 0 1 10 -4.199999999999999" fill="none" stroke="#38c030" stroke-width="2.4"/><path d="M11.5 5.6l5.500 1.500l-3.500 4.500z" fill="#38c030"/>
<path d="M16 13a6 4.800000000000001 0 0 1 -10 4.199999999999999" fill="none" stroke="#e8d020" stroke-width="2.4"/><path d="M8.5 20.4l-5.500 -1.500l3.500 -4.500z" fill="#e8d020"/></g>
<g transform="translate(177.3 68.5) scale(1)"><g transform="translate(0 0) scale(1)"><path d="M.3 8.200Q9.500 -1 19.700 6.500Q15 10.800 9.500 10.300Q4 10.300 .3 8.200z" fill="#d4dbe8"/>
<circle cx="10.200" cy="5.400" r="4.300" fill="#40609c"/><circle cx="10.200" cy="5.400" r="2.100" fill="#121c3c"/><circle cx="8.700" cy="4" r="1" fill="#c8d8f0"/>
<path d="M.3 8.200Q4 2 10 .8Q16 1 19.700 6.300Q15 2.600 10 2.800Q5 3.200 .3 8.200z" fill="#3a3244" stroke="#3a3244" stroke-width=".7"/><path d="M3 4.200l-1.400-1.800M6 2.300l-.8-2M10 1.300V-.7M14 2l.8-2M17 3.700l1.500-1.600" stroke="#3a3244" stroke-width=".8"/>
<path d="M.8 8.700Q9 11.800 19 7.200" fill="none" stroke="#a87a90" stroke-width=".9"/></g><path d="M0 11.25h2.25v-2.25h1.9800000000000002v2.25h2.25v1.9800000000000002h-2.25v2.25h-1.9800000000000002v-2.25h-2.25z" fill="#6adf2a" stroke="#3e9a10" stroke-width=".4"/><path d="M6 18.500L12 9.500" stroke="#222" stroke-width="1.100"/><rect x="11" y="16" width="8" height="2.400" fill="#e8e000" stroke="#a8a000" stroke-width=".4"/></g>
<g transform="translate(203.3 68.5) scale(1)"><g transform="translate(0 0) scale(1)"><path d="M.3 8.200Q9.500 -1 19.700 6.500Q15 10.800 9.500 10.300Q4 10.300 .3 8.200z" fill="#d4dbe8"/>
<circle cx="10.200" cy="5.400" r="4.300" fill="#40609c"/><circle cx="10.200" cy="5.400" r="2.100" fill="#121c3c"/><circle cx="8.700" cy="4" r="1" fill="#c8d8f0"/>
<path d="M.3 8.200Q4 2 10 .8Q16 1 19.700 6.300Q15 2.600 10 2.800Q5 3.200 .3 8.200z" fill="#3a3244" stroke="#3a3244" stroke-width=".7"/><path d="M3 4.200l-1.400-1.800M6 2.300l-.8-2M10 1.300V-.7M14 2l.8-2M17 3.700l1.500-1.600" stroke="#3a3244" stroke-width=".8"/>
<path d="M.8 8.700Q9 11.800 19 7.200" fill="none" stroke="#a87a90" stroke-width=".9"/></g><path d="M7 12.875h2.875v-2.875h2.53v2.875h2.875v2.53h-2.875v2.875h-2.53v-2.875h-2.875z" fill="#6adf2a" stroke="#3e9a10" stroke-width=".4"/></g>
<g transform="translate(229.3 68.5) scale(1)"><g transform="translate(0 0) scale(1)"><path d="M.3 8.200Q9.500 -1 19.700 6.500Q15 10.800 9.500 10.300Q4 10.300 .3 8.200z" fill="#d4dbe8"/>
<circle cx="10.200" cy="5.400" r="4.300" fill="#40609c"/><circle cx="10.200" cy="5.400" r="2.100" fill="#121c3c"/><circle cx="8.700" cy="4" r="1" fill="#c8d8f0"/>
<path d="M.3 8.200Q4 2 10 .8Q16 1 19.700 6.300Q15 2.600 10 2.800Q5 3.200 .3 8.200z" fill="#3a3244" stroke="#3a3244" stroke-width=".7"/><path d="M3 4.200l-1.400-1.800M6 2.300l-.8-2M10 1.300V-.7M14 2l.8-2M17 3.700l1.500-1.600" stroke="#3a3244" stroke-width=".8"/>
<path d="M.8 8.700Q9 11.800 19 7.200" fill="none" stroke="#a87a90" stroke-width=".9"/></g><rect x="7" y="13" width="10" height="2.400" fill="#e8e000" stroke="#a8a000" stroke-width=".4"/></g>
<g transform="translate(273.0 68.5) scale(1)"><path d="M3.5 11a6.5 5.2 0 0 1 11.0 -4.55" fill="none" stroke="#5a8ad8" stroke-width="3.2"/><path d="M12.0 2.1499999999999995l5.500 1.500l-3.500 4.500z" fill="#5a8ad8"/>
<path d="M16.5 10a6.5 5.2 0 0 1 -11.0 4.55" fill="none" stroke="#7aa4e4" stroke-width="3.2"/><path d="M8.0 17.85l-5.500 -1.500l3.500 -4.500z" fill="#7aa4e4"/></g>
<g transform="translate(300.0 68.5) scale(1)"><path d="M4.700 3.700V15.300A5.300 2.200 0 0 0 15.300 15.300V3.700" fill="none" stroke="#222" stroke-width=".9"/><ellipse cx="10" cy="3.700" rx="5.300" ry="2.200" fill="none" stroke="#222" stroke-width=".9"/><ellipse cx="10" cy="15.300" rx="5.300" ry="2.200" fill="none" stroke="#222" stroke-width=".8"/></g>
<g transform="translate(326.0 68.5) scale(1)"><path d="M4.700 3.700V15.300A5.300 2.200 0 0 0 15.300 15.300V3.700" fill="none" stroke="#222" stroke-width=".9"/><ellipse cx="10" cy="3.700" rx="5.300" ry="2.200" fill="none" stroke="#222" stroke-width=".9"/></g>
<g transform="translate(352.0 68.5) scale(1)"><path d="M4.700 3.700V15.300A5.300 2.200 0 0 0 15.300 15.300V3.700" fill="none" stroke="#222" stroke-width=".9"/><ellipse cx="10" cy="3.700" rx="5.300" ry="2.200" fill="none" stroke="#222" stroke-width=".9"/><ellipse cx="10" cy="15.300" rx="5.300" ry="2.200" fill="none" stroke="#666" stroke-width=".7" stroke-dasharray="1.500 1"/></g>
<g transform="translate(378.0 68.5) scale(1)"><ellipse cx="13" cy="16.800" rx="6" ry="1.600" fill="#6a6a78" opacity=".45"/><path d="M4.700 3.700V15.300A5.300 2.200 0 0 0 15.300 15.300V3.700z" fill="url(#gcb)" stroke="#28e0f0" stroke-width="1"/><ellipse cx="10" cy="3.700" rx="5.300" ry="2.200" fill="#3858a8" stroke="#28e0f0" stroke-width="1"/></g>
<rect x="401.500" y="66.500" width="23" height="23" fill="#ffe680" stroke="#e8c460" stroke-width="1"/>
<g transform="translate(404.0 68.5) scale(1)"><ellipse cx="13" cy="16.800" rx="6" ry="1.600" fill="#6a6a78" opacity=".45"/><path d="M4.700 3.700V15.300A5.300 2.200 0 0 0 15.300 15.300V3.700z" fill="url(#gcb)" stroke="#1a2a5a" stroke-width=".7"/><ellipse cx="10" cy="3.700" rx="5.300" ry="2.200" fill="#2c4c9c" stroke="#1a2a5a" stroke-width=".7"/></g>
<g transform="translate(430.0 68.5) scale(1)"><ellipse cx="13" cy="16.800" rx="6" ry="1.600" fill="#6a6a78" opacity=".45"/><path d="M4.700 3.700V15.300A5.300 2.200 0 0 0 15.300 15.300V3.700z" fill="url(#gcc)" stroke="#30e0f0" stroke-width="1"/><ellipse cx="10" cy="3.700" rx="5.300" ry="2.200" fill="#dfe8f6" stroke="#30e0f0" stroke-width="1"/><path d="M4.700 13.500A5.300 2.200 0 0 0 15.300 13.500" fill="none" stroke="#30e0f0" stroke-width=".7"/></g>
<g transform="translate(456.0 68.5) scale(1)"><ellipse cx="13" cy="16.800" rx="6" ry="1.600" fill="#6a6a78" opacity=".45"/><path d="M4.700 3.700V15.300A5.300 2.200 0 0 0 15.300 15.300V3.700z" fill="url(#gcl)" stroke="#444" stroke-width=".8"/><ellipse cx="10" cy="3.700" rx="5.300" ry="2.200" fill="#d4def2" stroke="#444" stroke-width=".8"/><path d="M4.700 13.500A5.300 2.200 0 0 0 15.300 13.500" fill="none" stroke="#889" stroke-width=".6"/></g>
<g transform="translate(482.0 68.5) scale(1)"><path d="M4.700 3.700V15.300A5.300 2.200 0 0 0 15.300 15.300V3.700" fill="none" stroke="#222" stroke-width=".9"/><ellipse cx="10" cy="3.700" rx="5.300" ry="2.200" fill="none" stroke="#222" stroke-width=".9"/><path d="M6.500 5.500L8 17.300M8 5.800L6 16.500M10 5.900L12 17.400M12 5.800L9.500 17.500M14 5.300L13 17M6.500 5.500L10 17.500M13.500 5.500L11 12L14.500 16" fill="none" stroke="#222" stroke-width=".6"/></g>
<g transform="translate(508.0 68.5) scale(1)"><g transform="translate(-3 -1.500) scale(.8)"><ellipse cx="13" cy="16.800" rx="6" ry="1.600" fill="#6a6a78" opacity=".45"/><path d="M4.700 3.700V15.300A5.300 2.200 0 0 0 15.300 15.300V3.700z" fill="url(#gcl)" stroke="#444" stroke-width=".8"/><ellipse cx="10" cy="3.700" rx="5.300" ry="2.200" fill="#d4def2" stroke="#444" stroke-width=".8"/><path d="M4.700 13.500A5.300 2.200 0 0 0 15.300 13.500" fill="none" stroke="#889" stroke-width=".6"/></g><g transform="translate(6 4) scale(.85)"><ellipse cx="13" cy="16.800" rx="6" ry="1.600" fill="#6a6a78" opacity=".45"/><path d="M4.700 3.700V15.300A5.300 2.200 0 0 0 15.300 15.300V3.700z" fill="url(#gcb)" stroke="#1a2a5a" stroke-width=".7"/><ellipse cx="10" cy="3.700" rx="5.300" ry="2.200" fill="#2c4c9c" stroke="#1a2a5a" stroke-width=".7"/></g><path d="M10 1.500q4 -2 6 1l1.500-1v4h-4l1.300-1.300q-2-2-4-.7z" fill="#30c030"/><path d="M9 19q-4 1.500-6-1.500l-1.500 1v-4h4l-1.300 1.300q2 2 4 1z" fill="#30c030"/></g>
<g transform="translate(534.0 68.5) scale(1)"><g transform="translate(-2.500 0) scale(.95)"><ellipse cx="13" cy="16.800" rx="6" ry="1.600" fill="#6a6a78" opacity=".45"/><path d="M4.700 3.700V15.300A5.300 2.200 0 0 0 15.300 15.300V3.700z" fill="url(#gcb)" stroke="#1a2a5a" stroke-width=".7"/><ellipse cx="10" cy="3.700" rx="5.300" ry="2.200" fill="#2c4c9c" stroke="#1a2a5a" stroke-width=".7"/></g><path d="M8 13.5a5 4.0 0 0 1 8 -3.5" fill="none" stroke="#5a8ad8" stroke-width="2.6"/><path d="M13.5 6.0l5.500 1.500l-3.500 4.500z" fill="#5a8ad8"/>
<path d="M18 12.5a5 4.0 0 0 1 -8 3.5" fill="none" stroke="#7aa4e4" stroke-width="2.6"/><path d="M12.5 19.0l-5.500 -1.500l3.500 -4.500z" fill="#7aa4e4"/></g>
<g transform="translate(560.0 68.5) scale(1)"><rect x="1" y="2" width="16" height="13" fill="#5a78b0" stroke="#aab" stroke-width="1"/><g transform="translate(10.5 10) scale(1.05)"><path d="M-6 6L4 -4" stroke="#4a80d0" stroke-width="2.400" stroke-linecap="round"/><path d="M3 -6l4 -1.500l1.500 1.500l-1.500 4z" fill="#d8d8d8" stroke="#777" stroke-width=".4"/>
<path d="M6 6L-3 -3" stroke="#e8e8e8" stroke-width="2.200" stroke-linecap="round"/><path d="M-6.500 -4.500a3 3 0 0 0 4 4l1-1l-3-3z" fill="#e8e8e8" stroke="#888" stroke-width=".4"/><path d="M-3.500 -7a3 3 0 0 1 3 4.500l-1.500 .5l-3 -3z" fill="#e8e8e8" stroke="#888" stroke-width=".4"/></g></g>
<g transform="translate(602.0 68.5) scale(1)"><path d="M1.5 3.2l4.25 -2.2l4.25 2.2v4.675000000000001l-4.25 2.2l-4.25 -2.2z" fill="#8e908e" stroke="#3a3a3a" stroke-width=".7"/><path d="M5.75 5.4l4.25 -2.2v4.675000000000001l-4.25 2.2z" fill="#b8bab8"/><path d="M1.5 3.2l4.25 -2.2l4.25 2.2l-4.25 2.2z" fill="#c8cac8"/><path d="M1.5 3.2l4.25 2.2l4.25 -2.2M5.75 5.4v4.675000000000001" fill="none" stroke="#3a3a3a" stroke-width=".6"/><path d="M10 3.2l4.25 -2.2l4.25 2.2v4.675000000000001l-4.25 2.2l-4.25 -2.2z" fill="#d8dad8" stroke="#3a3a3a" stroke-width=".7"/><path d="M14.25 5.4l4.25 -2.2v4.675000000000001l-4.25 2.2z" fill="#f4f4f4"/><path d="M10 3.2l4.25 -2.2l4.25 2.2l-4.25 2.2z" fill="#ececec"/><path d="M10 3.2l4.25 2.2l4.25 -2.2M14.25 5.4v4.675000000000001" fill="none" stroke="#3a3a3a" stroke-width=".6"/><path d="M0 12.5h2.5v-2.5h2.2v2.5h2.5v2.2h-2.5v2.5h-2.2v-2.5h-2.5z" fill="#6adf2a" stroke="#3e9a10" stroke-width=".4"/><path d="M10 10.5l3.500 -.8l-1 3.200M13 11.3q5.500 1 2.500 5.500l-5 3.500" fill="none" stroke="#3a78e0" stroke-width="1.700" stroke-linecap="round"/></g>
<g transform="translate(628.0 68.5) scale(1)"><path d="M1.5 3.2l4.25 -2.2l4.25 2.2v4.675000000000001l-4.25 2.2l-4.25 -2.2z" fill="#8e908e" stroke="#3a3a3a" stroke-width=".7"/><path d="M5.75 5.4l4.25 -2.2v4.675000000000001l-4.25 2.2z" fill="#b8bab8"/><path d="M1.5 3.2l4.25 -2.2l4.25 2.2l-4.25 2.2z" fill="#c8cac8"/><path d="M1.5 3.2l4.25 2.2l4.25 -2.2M5.75 5.4v4.675000000000001" fill="none" stroke="#3a3a3a" stroke-width=".6"/><path d="M10 3.2l4.25 -2.2l4.25 2.2v4.675000000000001l-4.25 2.2l-4.25 -2.2z" fill="#d8dad8" stroke="#3a3a3a" stroke-width=".7"/><path d="M14.25 5.4l4.25 -2.2v4.675000000000001l-4.25 2.2z" fill="#f4f4f4"/><path d="M10 3.2l4.25 -2.2l4.25 2.2l-4.25 2.2z" fill="#ececec"/><path d="M10 3.2l4.25 2.2l4.25 -2.2M14.25 5.4v4.675000000000001" fill="none" stroke="#3a3a3a" stroke-width=".6"/><rect x="2" y="7.5" width="6" height="11.500" rx="2" fill="#111"/><circle cx="5" cy="10.5" r="2.100" fill="#f0c000"/><circle cx="5" cy="15.8" r="2.100" fill="#10d010"/><rect x="12" y="7.5" width="6" height="11.500" rx="2" fill="#111"/><circle cx="15" cy="10.5" r="2.100" fill="#f01010"/><circle cx="15" cy="15.8" r="2.100" fill="#f0c000"/></g>
<g transform="translate(654.0 68.5) scale(1)"><path d="M1.5 3.2l4.25 -2.2l4.25 2.2v4.675000000000001l-4.25 2.2l-4.25 -2.2z" fill="#8e908e" stroke="#3a3a3a" stroke-width=".7"/><path d="M5.75 5.4l4.25 -2.2v4.675000000000001l-4.25 2.2z" fill="#b8bab8"/><path d="M1.5 3.2l4.25 -2.2l4.25 2.2l-4.25 2.2z" fill="#c8cac8"/><path d="M1.5 3.2l4.25 2.2l4.25 -2.2M5.75 5.4v4.675000000000001" fill="none" stroke="#3a3a3a" stroke-width=".6"/><path d="M10 3.2l4.25 -2.2l4.25 2.2v4.675000000000001l-4.25 2.2l-4.25 -2.2z" fill="#d8dad8" stroke="#3a3a3a" stroke-width=".7"/><path d="M14.25 5.4l4.25 -2.2v4.675000000000001l-4.25 2.2z" fill="#f4f4f4"/><path d="M10 3.2l4.25 -2.2l4.25 2.2l-4.25 2.2z" fill="#ececec"/><path d="M10 3.2l4.25 2.2l4.25 -2.2M14.25 5.4v4.675000000000001" fill="none" stroke="#3a3a3a" stroke-width=".6"/><path d="M4 14a6 4.800000000000001 0 0 1 10 -4.199999999999999" fill="none" stroke="#38c030" stroke-width="2.4"/><path d="M11.5 5.6l5.500 1.500l-3.500 4.500z" fill="#38c030"/>
<path d="M16 13a6 4.800000000000001 0 0 1 -10 4.199999999999999" fill="none" stroke="#e8d020" stroke-width="2.4"/><path d="M8.5 20.4l-5.500 -1.500l3.500 -4.500z" fill="#e8d020"/></g>
<g transform="translate(680.0 68.5) scale(1)"><path d="M1.5 3.2l4.25 -2.2l4.25 2.2v4.675000000000001l-4.25 2.2l-4.25 -2.2z" fill="#8e908e" stroke="#3a3a3a" stroke-width=".7"/><path d="M5.75 5.4l4.25 -2.2v4.675000000000001l-4.25 2.2z" fill="#b8bab8"/><path d="M1.5 3.2l4.25 -2.2l4.25 2.2l-4.25 2.2z" fill="#c8cac8"/><path d="M1.5 3.2l4.25 2.2l4.25 -2.2M5.75 5.4v4.675000000000001" fill="none" stroke="#3a3a3a" stroke-width=".6"/><path d="M10 3.2l4.25 -2.2l4.25 2.2v4.675000000000001l-4.25 2.2l-4.25 -2.2z" fill="#d8dad8" stroke="#3a3a3a" stroke-width=".7"/><path d="M14.25 5.4l4.25 -2.2v4.675000000000001l-4.25 2.2z" fill="#f4f4f4"/><path d="M10 3.2l4.25 -2.2l4.25 2.2l-4.25 2.2z" fill="#ececec"/><path d="M10 3.2l4.25 2.2l4.25 -2.2M14.25 5.4v4.675000000000001" fill="none" stroke="#3a3a3a" stroke-width=".6"/><path d="M0 11.25h2.25v-2.25h1.9800000000000002v2.25h2.25v1.9800000000000002h-2.25v2.25h-1.9800000000000002v-2.25h-2.25z" fill="#6adf2a" stroke="#3e9a10" stroke-width=".4"/><path d="M6 18.500L12 9.500" stroke="#222" stroke-width="1.100"/><rect x="11" y="16" width="8" height="2.400" fill="#e8e000" stroke="#a8a000" stroke-width=".4"/></g>
<g transform="translate(707.0 68.5) scale(1)"><ellipse cx="13" cy="16.800" rx="6" ry="1.600" fill="#6a6a78" opacity=".45"/><path d="M4.700 3.700V15.300A5.300 2.200 0 0 0 15.300 15.300V3.700z" fill="url(#gcb)" stroke="#1a2a5a" stroke-width=".7"/><ellipse cx="10" cy="3.700" rx="5.300" ry="2.200" fill="#2c4c9c" stroke="#1a2a5a" stroke-width=".7"/><path d="M10 7v10" stroke="#111" stroke-width="1.200" stroke-dasharray="2.500 1.500"/></g>
<g transform="translate(733.0 68.5) scale(1)"><ellipse cx="13" cy="16.800" rx="6" ry="1.600" fill="#6a6a78" opacity=".45"/><path d="M4.700 3.700V15.300A5.300 2.200 0 0 0 15.300 15.300V3.700z" fill="url(#gcb)" stroke="#1a2a5a" stroke-width=".7"/><ellipse cx="10" cy="3.700" rx="5.300" ry="2.200" fill="#2c4c9c" stroke="#1a2a5a" stroke-width=".7"/><path d="M8.500 6v11.500M11.500 6v11.500" stroke="#f0f040" stroke-width="1.100"/><path d="M10 6v11.500" stroke="#e8ecf8" stroke-width="1.600"/></g>
<g transform="translate(759.0 68.5) scale(1)"><ellipse cx="13" cy="16.800" rx="6" ry="1.600" fill="#6a6a78" opacity=".45"/><path d="M4.700 3.700V15.300A5.300 2.200 0 0 0 15.300 15.300V3.700z" fill="url(#gcc)" stroke="#30e0f0" stroke-width="1"/><ellipse cx="10" cy="3.700" rx="5.300" ry="2.200" fill="#dfe8f6" stroke="#30e0f0" stroke-width="1"/><path d="M5.500 10l2-1.500l2.500 3.500l5-8l2 1.200l-6.500 11.300h-1.500z" fill="url(#ggreen)" stroke="#1a8a18" stroke-width=".4"/></g>
<g transform="translate(785.0 68.5) scale(1)"><ellipse cx="6" cy="16" rx="7" ry="1.600" fill="#6a6a78" opacity=".45"/><path d="M4.700 3.700V15.300A5.300 2.200 0 0 0 15.300 15.300V3.700z" fill="url(#gcc)" stroke="#30e0f0" stroke-width="1"/><ellipse cx="10" cy="3.700" rx="5.300" ry="2.200" fill="#dfe8f6" stroke="#30e0f0" stroke-width="1"/><path d="M4.700 13.500A5.300 2.200 0 0 0 15.300 13.500" fill="none" stroke="#30e0f0" stroke-width=".7"/><rect x="12" y=".5" width="5.500" height="5.500" fill="none" stroke="#d8a020" stroke-width="1.200"/><circle cx="14" cy="3.500" r="1.500" fill="none" stroke="#e05020" stroke-width=".9"/></g>
<g transform="translate(811.0 68.5) scale(1)"><path d="M4.700 3.700V15.300A5.300 2.200 0 0 0 15.300 15.300V3.700" fill="#dce8fa" stroke="#4a90e0" stroke-width=".9"/><ellipse cx="10" cy="3.700" rx="5.300" ry="2.200" fill="#dce8fa" stroke="#4a90e0" stroke-width=".9"/><path d="M6.500 5.500L8 17.300M8 5.800L6 16.500M10 5.900L12 17.400M12 5.800L9.500 17.500M14 5.300L13 17M13.500 5.500L11 12L14.500 16" fill="none" stroke="#4a90e0" stroke-width=".6"/></g>
<g transform="translate(837.0 68.5) scale(1)"><path d="M1 5.500l9 -3.500l9 3.500l-3 9l-6 4.500l-6 -4.500z" fill="#2a4a9a" stroke="#0e1a40" stroke-width=".8"/><path d="M1 5.500l9 -3.500l9 3.500l-9 3z" fill="#5a84d4" stroke="#0e1a40" stroke-width=".6"/><path d="M10 8.500V19" stroke="#0e1a40" stroke-width=".8"/><path d="M10 8.500l9-3l-3 9l-6 4.500z" fill="#1a2e70"/></g>
<g transform="translate(878.0 68.5) scale(1)"><path d="M1 2.500h3.500M2.750 .8v3.400M1 6.300h3.500" stroke="#111" stroke-width=".9"/><path d="M10 11l4.5 -2l4.5 2v6.3l-4.5 2l-4.5 -2z" fill="#5a5a5a" stroke="#2a2a2a" stroke-width=".5"/><path d="M10 11l4.5 2v6.3l-4.5 -2z" fill="#8a8c8a"/><path d="M10 11l4.5 -2l4.5 2l-4.5 2z" fill="#b0b2b0"/><path d="M6.82 10.709999999999999l-5 5.500" stroke="#8a8a8a" stroke-width="2.600" stroke-linecap="round"/><path d="M6.82 10.709999999999999l-5 5.500" stroke="#d8d8d8" stroke-width="1.200" stroke-linecap="round"/><circle cx="10" cy="7" r="5.3" fill="url(#glens)" stroke="#7a9ac8" stroke-width="1.400"/><path d="M8 4l5 3l-5 3z" fill="#b0c4dc" stroke="#8098b8" stroke-width=".5"/></g>
<g transform="translate(904.0 68.5) scale(1)"><path d="M10 11l4.5 -2l4.5 2v6.3l-4.5 2l-4.5 -2z" fill="#5a5a5a" stroke="#2a2a2a" stroke-width=".5"/><path d="M10 11l4.5 2v6.3l-4.5 -2z" fill="#8a8c8a"/><path d="M10 11l4.5 -2l4.5 2l-4.5 2z" fill="#b0b2b0"/><path d="M6.82 10.709999999999999l-5 5.500" stroke="#8a8a8a" stroke-width="2.600" stroke-linecap="round"/><path d="M6.82 10.709999999999999l-5 5.500" stroke="#d8d8d8" stroke-width="1.200" stroke-linecap="round"/><circle cx="10" cy="7" r="5.3" fill="url(#glens)" stroke="#7a9ac8" stroke-width="1.400"/><path d="M8 4l5 3l-5 3z" fill="#b0c4dc" stroke="#8098b8" stroke-width=".5"/><path d="M0.5 0.5l4 4M4.5 0.5l-4 4" stroke="#2aa818" stroke-width="1.300"/><rect x="1.2" y="1.2" width="2.600" height="2.600" fill="#58e030" stroke="#1a8a10" stroke-width=".4"/><path d="M15.5 0.5l4 4M19.5 0.5l-4 4" stroke="#2aa818" stroke-width="1.300"/><rect x="16.2" y="1.2" width="2.600" height="2.600" fill="#58e030" stroke="#1a8a10" stroke-width=".4"/><path d="M0.5 15.5l4 4M4.5 15.5l-4 4" stroke="#2aa818" stroke-width="1.300"/><rect x="1.2" y="16.2" width="2.600" height="2.600" fill="#58e030" stroke="#1a8a10" stroke-width=".4"/><path d="M15.5 15.5l4 4M19.5 15.5l-4 4" stroke="#2aa818" stroke-width="1.300"/><rect x="16.2" y="16.2" width="2.600" height="2.600" fill="#58e030" stroke="#1a8a10" stroke-width=".4"/></g>
<g transform="translate(930.0 68.5) scale(1)"><rect x="3" y="5" width="14" height="10" fill="#e8ecfa" stroke="#333" stroke-width="1"/><text x="10" y="13.500" text-anchor="middle" font-family="Liberation Sans,sans-serif" font-weight="bold" font-size="8.500" fill="#2a2a8a">1:1</text><path d="M0.5 2l4 4M4.5 2l-4 4" stroke="#2aa818" stroke-width="1.300"/><rect x="1.2" y="2.7" width="2.600" height="2.600" fill="#58e030" stroke="#1a8a10" stroke-width=".4"/><path d="M15.5 2l4 4M19.5 2l-4 4" stroke="#2aa818" stroke-width="1.300"/><rect x="16.2" y="2.7" width="2.600" height="2.600" fill="#58e030" stroke="#1a8a10" stroke-width=".4"/><path d="M0.5 14l4 4M4.5 14l-4 4" stroke="#2aa818" stroke-width="1.300"/><rect x="1.2" y="14.7" width="2.600" height="2.600" fill="#58e030" stroke="#1a8a10" stroke-width=".4"/><path d="M15.5 14l4 4M19.5 14l-4 4" stroke="#2aa818" stroke-width="1.300"/><rect x="16.2" y="14.7" width="2.600" height="2.600" fill="#58e030" stroke="#1a8a10" stroke-width=".4"/></g>
<g transform="translate(957.0 68.5) scale(1)"><polygon points="4.8,16.3 15.2,6.3 16.4,7.5 18.0,2.0 12.4,3.4 13.6,4.7 3.2,14.7" fill="url(#ggreen)" stroke="#167a14" stroke-width=".6"/><circle cx="4" cy="15.500" r="2.600" fill="url(#ggray)" stroke="#333" stroke-width=".5"/></g>
<g transform="translate(982.0 68.5) scale(1)"><path d="M4 12a6.500 8 0 0 1 9-9.500" fill="none" stroke="#2aa828" stroke-width="2.800"/><path d="M11 .2l6 2.300l-5 4z" fill="#2aa828"/><path d="M16 8a6.500 8 0 0 1 -9 9.500" fill="none" stroke="#2aa828" stroke-width="2.800"/><path d="M9 19.800l-6-2.300l5-4z" fill="#2aa828"/></g>
<g transform="translate(1008.0 68.5) scale(1)"><g transform="translate(0 -1) scale(1)"><path d="M.3 8.200Q9.500 -1 19.700 6.500Q15 10.800 9.500 10.300Q4 10.300 .3 8.200z" fill="#d4dbe8"/>
<circle cx="10.200" cy="5.400" r="4.300" fill="#40609c"/><circle cx="10.200" cy="5.400" r="2.100" fill="#121c3c"/><circle cx="8.700" cy="4" r="1" fill="#c8d8f0"/>
<path d="M.3 8.200Q4 2 10 .8Q16 1 19.700 6.300Q15 2.600 10 2.800Q5 3.200 .3 8.200z" fill="#3a3244" stroke="#3a3244" stroke-width=".7"/><path d="M3 4.200l-1.400-1.800M6 2.300l-.8-2M10 1.300V-.7M14 2l.8-2M17 3.700l1.500-1.600" stroke="#3a3244" stroke-width=".8"/>
<path d="M.8 8.700Q9 11.800 19 7.200" fill="none" stroke="#a87a90" stroke-width=".9"/></g><circle cx="10" cy="13.500" r="5.800" fill="url(#gsmile)" stroke="#c89010" stroke-width=".5"/><circle cx="8" cy="12" r=".9" fill="#333"/><circle cx="12" cy="12" r=".9" fill="#333"/><path d="M7 15q3 2.500 6 0" fill="none" stroke="#7a4a10" stroke-width=".8"/></g>
<g transform="translate(1052.0 68.5) scale(1)"><path d="M0 10l10 -6l10 5l-9 9z" fill="#dce6f8" stroke="#a8b8d8" stroke-width=".5"/>
<path d="M5 12V2.500" stroke="#1a6af0" stroke-width="1.600"/><path d="M5 0l2.300 4h-4.600z" fill="#1a6af0"/>
<path d="M5 12L13 6" stroke="#20b030" stroke-width="1.600"/><path d="M15 4.300l-1 4.200l-3.200 -2.800z" fill="#20b030"/>
<path d="M5 12L12 17" stroke="#e02020" stroke-width="1.600"/><path d="M14 19l-4.300 -.8l2.800 -3.200z" fill="#e02020"/>
<circle cx="5" cy="12" r="1.800" fill="#e8e8e8" stroke="#555" stroke-width=".5"/></g>
<g transform="translate(1078.0 68.5) scale(1)"><g transform="translate(8 -1) scale(.6)"><path d="M0 10l10 -6l10 5l-9 9z" fill="#dce6f8" stroke="#a8b8d8" stroke-width=".5"/>
<path d="M5 12V2.500" stroke="#1a6af0" stroke-width="1.600"/><path d="M5 0l2.300 4h-4.600z" fill="#1a6af0"/>
<path d="M5 12L13 6" stroke="#20b030" stroke-width="1.600"/><path d="M15 4.300l-1 4.200l-3.200 -2.800z" fill="#20b030"/>
<path d="M5 12L12 17" stroke="#e02020" stroke-width="1.600"/><path d="M14 19l-4.300 -.8l2.800 -3.200z" fill="#e02020"/>
<circle cx="5" cy="12" r="1.800" fill="#e8e8e8" stroke="#555" stroke-width=".5"/></g><rect x="7" y="13" width="10" height="5" fill="#e8e8e8" stroke="#888" stroke-width="1"/><ellipse cx="4" cy="17" rx="3" ry="2" fill="#999"/><polygon points="3.1,18.1 9.6,11.7 11.4,13.5 12.0,7.0 5.5,7.6 7.3,9.4 0.9,15.9" fill="url(#ggreen)" stroke="#167a14" stroke-width=".6"/></g>
<g transform="translate(1104.0 68.5) scale(1)"><g transform="translate(8 -1) scale(.6)"><path d="M0 10l10 -6l10 5l-9 9z" fill="#dce6f8" stroke="#a8b8d8" stroke-width=".5"/>
<path d="M5 12V2.500" stroke="#1a6af0" stroke-width="1.600"/><path d="M5 0l2.300 4h-4.600z" fill="#1a6af0"/>
<path d="M5 12L13 6" stroke="#20b030" stroke-width="1.600"/><path d="M15 4.300l-1 4.200l-3.200 -2.800z" fill="#20b030"/>
<path d="M5 12L12 17" stroke="#e02020" stroke-width="1.600"/><path d="M14 19l-4.300 -.8l2.800 -3.200z" fill="#e02020"/>
<circle cx="5" cy="12" r="1.800" fill="#e8e8e8" stroke="#555" stroke-width=".5"/></g><polygon points="10.1,15.9 6.1,12.0 7.8,10.3 1.5,9.5 2.3,15.8 4.0,14.1 7.9,18.1" fill="url(#ggreen)" stroke="#167a14" stroke-width=".6"/><polygon points="1.9,8.1 5.9,12.0 4.2,13.7 10.5,14.5 9.7,8.2 8.0,9.9 4.1,5.9" fill="url(#ggreen)" stroke="#167a14" stroke-width=".6"/></g>
<g transform="translate(1147.0 68.5) scale(1)"><rect x="1.0" y="1.0" width="5.800" height="5.800" fill="#00d0f0"/><rect x="7.2" y="1.0" width="5.800" height="5.800" fill="#f8e000"/><rect x="13.4" y="1.0" width="5.800" height="5.800" fill="#00e020"/><rect x="1.0" y="7.2" width="5.800" height="5.800" fill="#f88000"/><rect x="7.2" y="7.2" width="5.800" height="5.800" fill="#a86000"/><rect x="13.4" y="7.2" width="5.800" height="5.800" fill="#f000e0"/><rect x="1.0" y="13.4" width="5.800" height="5.800" fill="#0010e8"/><rect x="7.2" y="13.4" width="5.800" height="5.800" fill="#00a030"/><rect x="13.4" y="13.4" width="5.800" height="5.800" fill="#808080"/></g>
<g transform="translate(1173.0 68.5) scale(1)"><rect x="2.500" y=".5" width="15" height="19" fill="#f4f6fa" stroke="#8a98b8" stroke-width="1"/><rect x="4.500" y="2.500" width="11" height="1.500" fill="#7ab0f0"/><rect x="4.500" y="5" width="11" height="1.200" fill="#f8d880"/><rect x="4.500" y="7" width="11" height="1" fill="#b0e8a0"/><rect x="5.0" y="9.0" width="3" height="2.400" fill="#00d0f0"/><rect x="8.4" y="9.0" width="3" height="2.400" fill="#f8e000"/><rect x="11.8" y="9.0" width="3" height="2.400" fill="#00e020"/><rect x="5.0" y="11.8" width="3" height="2.400" fill="#f88000"/><rect x="8.4" y="11.8" width="3" height="2.400" fill="#a86000"/><rect x="11.8" y="11.8" width="3" height="2.400" fill="#f000e0"/><rect x="5.0" y="14.6" width="3" height="2.400" fill="#0010e8"/><rect x="8.4" y="14.6" width="3" height="2.400" fill="#00a030"/><rect x="11.8" y="14.6" width="3" height="2.400" fill="#808080"/></g>
<g transform="translate(1199.0 68.5) scale(1)"><circle cx="10" cy="10" r="9.300" fill="#7a9a50" stroke="#4a6a30" stroke-width="1"/><circle cx="10" cy="10" r="8" fill="#88a860"/><g transform="translate(10 10) scale(1.05)"><path d="M-6 6L4 -4" stroke="#3a78d0" stroke-width="2.400" stroke-linecap="round"/><path d="M3 -6l4 -1.500l1.500 1.500l-1.500 4z" fill="#d8d8d8" stroke="#777" stroke-width=".4"/>
<path d="M6 6L-3 -3" stroke="#f0f0f0" stroke-width="2.200" stroke-linecap="round"/><path d="M-6.500 -4.500a3 3 0 0 0 4 4l1-1l-3-3z" fill="#f0f0f0" stroke="#888" stroke-width=".4"/><path d="M-3.500 -7a3 3 0 0 1 3 4.500l-1.500 .5l-3 -3z" fill="#f0f0f0" stroke="#888" stroke-width=".4"/></g></g>
<g transform="translate(1225.0 68.5) scale(1)"><rect x="1" y="1" width="18" height="18" fill="#e0e6f2" stroke="#6a7a98" stroke-width="1"/><rect x="1" y="1" width="18" height="3" fill="#3a5a9a"/><path d="M3 6v12" stroke="#a06030" stroke-width="1.500" stroke-dasharray="1.500 1.500"/><path d="M6 6.500h12" stroke="#a0b040" stroke-width="1.500" stroke-dasharray="1.500 1"/><g transform="translate(11.5 13) scale(0.8)"><path d="M-6 6L4 -4" stroke="#5a90d8" stroke-width="2.400" stroke-linecap="round"/><path d="M3 -6l4 -1.500l1.500 1.500l-1.500 4z" fill="#d8d8d8" stroke="#777" stroke-width=".4"/>
<path d="M6 6L-3 -3" stroke="#dde" stroke-width="2.200" stroke-linecap="round"/><path d="M-6.500 -4.500a3 3 0 0 0 4 4l1-1l-3-3z" fill="#dde" stroke="#888" stroke-width=".4"/><path d="M-3.500 -7a3 3 0 0 1 3 4.500l-1.500 .5l-3 -3z" fill="#dde" stroke="#888" stroke-width=".4"/></g></g>
<g transform="translate(1251.0 68.5) scale(1)"><rect x="2" y="2" width="15.500" height="16" fill="none" stroke="#1a3a7a" stroke-width="1.500" stroke-dasharray="1.500 2"/><path d="M7 9l6-5l5 1.500l1 3l-2.500 2.500l-4.500 0l-2 2.500z" fill="#e8b878" stroke="#a87838" stroke-width=".5"/><circle cx="6.500" cy="14.500" r="3" fill="#f0e020"/><path d="M4.500 14.500h4M6.500 12.500v4" stroke="#2050e0" stroke-width="1.100"/></g>
<g transform="translate(1277.0 68.5) scale(1)"><path d="M5 4l14 -2l-4 13l-14 2z" fill="#3a6ad8" stroke="#2040a0" stroke-width=".6"/><path d="M7 6l10 -1.500l-3 9l-10 1.500z" fill="#e03838"/><path d="M6 9l12-1.800M4.500 12.500l12-1.800M9.500 5.500l-3 9.500M12.500 5l-3 9.500M15.500 4.600l-3 9.500" stroke="#9ab8f8" stroke-width=".8"/><path d="M15 15l4-2l-1 2.500z" fill="#555"/></g>
<rect x="2" y="3" width="16" height="16" fill="#6db33f"/><path d="M5.500 7l4.500 9.500l4.500-10" fill="none" stroke="#fff" stroke-width="2.400" stroke-linejoin="round"/><circle cx="8.300" cy="6" r="1.200" fill="#fff"/>
<path d="M20.500 6v13" stroke="#9aa" stroke-width="1"/><path d="M312.500 6v13" stroke="#9aa" stroke-width="1"/>
<g transform="translate(30.0 2.0) scale(1)"><path d="M4 1.5h8l4 4v12h-12z" fill="url(#gdoc)" stroke="#111" stroke-width="1.100"/><path d="M12 1.5v4h4" fill="#fff" stroke="#111" stroke-width=".7"/></g>
<g transform="translate(54.0 2.0) scale(1)"><path d="M1 17V6h5.25l1.500 1.500h7.5v2" fill="#f0c860" stroke="#c89a30" stroke-width=".5"/><path d="M1 17l3.0 -7.199999999999999h12.75l-3.0 7.199999999999999z" fill="url(#gfold)" stroke="#c89a30" stroke-width=".5"/><path d="M5 9q2-7 9-4l1-2.500l3 6.500l-7 .5l1.500-2q-4-1.500-6 3z" fill="#30b030" stroke="#188018" stroke-width=".4"/></g>
<g transform="translate(78.0 2.0) scale(1)"><path d="M0 8V2h3.15l1.500 1.500h4.5v2" fill="#f0c860" stroke="#c89a30" stroke-width=".5"/><path d="M0 8l1.8 -4.2h7.6499999999999995l-1.8 4.2z" fill="url(#gfold)" stroke="#c89a30" stroke-width=".5"/><path d="M0 17V11h3.15l1.500 1.500h4.5v2" fill="#f0c860" stroke="#c89a30" stroke-width=".5"/><path d="M0 17l1.8 -4.2h7.6499999999999995l-1.8 4.2z" fill="url(#gfold)" stroke="#c89a30" stroke-width=".5"/><path d="M8 3h5v15h-5" fill="none" stroke="#58d838" stroke-width="1"/><path d="M10 6h4l4 4v6h-8z" fill="url(#gdoc)" stroke="#111" stroke-width="1.100"/><path d="M14 6v4h4" fill="#fff" stroke="#111" stroke-width=".7"/></g>
<g transform="translate(101.0 2.0) scale(1)"><g transform="translate(2 2.5) scale(1.05)"><rect x="0" y="0" width="15" height="15" rx="1" fill="#4a6aa8" stroke="#2a3a6a" stroke-width=".6"/><rect x="2" y="1" width="11" height="7.500" fill="#f4f4f4"/><rect x="2" y="1" width="11" height="1.600" fill="#e04030"/><path d="M3 4.500h9M3 6.300h9" stroke="#b0b0b0" stroke-width=".6"/><rect x="3.500" y="10" width="8" height="5" fill="#cfd4dc"/><rect x="4.500" y="10.800" width="2" height="3.500" fill="#3a4a6a"/></g></g>
<g transform="translate(125.0 2.0) scale(1)"><g transform="translate(7 1) scale(0.72)"><rect x="0" y="0" width="15" height="15" rx="1" fill="#4a6aa8" stroke="#2a3a6a" stroke-width=".6"/><rect x="2" y="1" width="11" height="7.500" fill="#f4f4f4"/><rect x="2" y="1" width="11" height="1.600" fill="#e04030"/><path d="M3 4.500h9M3 6.300h9" stroke="#b0b0b0" stroke-width=".6"/><rect x="3.500" y="10" width="8" height="5" fill="#cfd4dc"/><rect x="4.500" y="10.800" width="2" height="3.500" fill="#3a4a6a"/></g><g transform="translate(1 7) scale(0.78)"><rect x="0" y="0" width="15" height="15" rx="1" fill="#4a6aa8" stroke="#2a3a6a" stroke-width=".6"/><rect x="2" y="1" width="11" height="7.500" fill="#f4f4f4"/><rect x="2" y="1" width="11" height="1.600" fill="#e04030"/><path d="M3 4.500h9M3 6.300h9" stroke="#b0b0b0" stroke-width=".6"/><rect x="3.500" y="10" width="8" height="5" fill="#cfd4dc"/><rect x="4.500" y="10.800" width="2" height="3.500" fill="#3a4a6a"/></g></g>
<g transform="translate(150.0 2.0) scale(1)"><g transform="translate(0 -1) scale(0.8)"><rect x="0" y="0" width="15" height="15" rx="1" fill="#4a6aa8" stroke="#2a3a6a" stroke-width=".6"/><rect x="2" y="1" width="11" height="7.500" fill="#f4f4f4"/><rect x="2" y="1" width="11" height="1.600" fill="#e04030"/><path d="M3 4.500h9M3 6.300h9" stroke="#b0b0b0" stroke-width=".6"/><rect x="3.500" y="10" width="8" height="5" fill="#cfd4dc"/><rect x="4.500" y="10.800" width="2" height="3.500" fill="#3a4a6a"/></g><path d="M9 11l5.0 -2l5.0 2v7.0l-5.0 2l-5.0 -2z" fill="#5a5a5a" stroke="#2a2a2a" stroke-width=".5"/><path d="M9 11l5.0 2v7.0l-5.0 -2z" fill="#8a8c8a"/><path d="M9 11l5.0 -2l5.0 2l-5.0 2z" fill="#b0b2b0"/><path d="M12 1q4 0 5 3l1.500-.5l-1 3.500l-3-2l1.300-.5q-1-1.800-3.800-1.500z" fill="#30b030"/></g>
<g transform="translate(174.0 2.0) scale(1)"><rect x="2" y="9" width="16" height="7" rx="1" fill="#d8d8d8" stroke="#666" stroke-width=".7"/><rect x="4" y="14" width="12" height="3.500" fill="#f4f4f4" stroke="#888" stroke-width=".5"/><rect x="5" y="1" width="10" height="8.500" fill="#fff" stroke="#888" stroke-width=".6"/><path d="M10 2.500l3 3h-2v3h-2v-3h-2z" fill="#30c030"/></g>
<g transform="translate(198.0 2.0) scale(1)"><circle cx="10" cy="10" r="9.500" fill="#6a8a48" stroke="#4a6a30" stroke-width=".8"/><g transform="translate(1 1.500) scale(.95)"><path d="M13 13l4.500 4.500" stroke="#d8d8d8" stroke-width="2.400" stroke-linecap="round"/><circle cx="9" cy="8.500" r="5.500" fill="url(#glens)" stroke="#c8d8e8" stroke-width="1.300"/></g></g>
<g transform="translate(222.0 2.0) scale(1)"><g transform=""><path d="M2 8l6.500-6v3.500q9 0 9 7q0 4-5 6q2.500-3 1-5.500q-1.500-2-5-2v3.500z" fill="#8a8a8a" stroke="#707070" stroke-width=".5"/></g></g>
<g transform="translate(246.0 2.0) scale(1)"><g transform="translate(20 0) scale(-1 1)"><path d="M2 8l6.500-6v3.500q9 0 9 7q0 4-5 6q2.500-3 1-5.500q-1.500-2-5-2v3.500z" fill="#8a8a8a" stroke="#707070" stroke-width=".5"/></g></g>
<g transform="translate(270.0 2.0) scale(1)"><g transform="translate(2 0)"><g transform=""><path d="M2 8l6.500-6v3.500q9 0 9 7q0 4-5 6q2.500-3 1-5.500q-1.500-2-5-2v3.500z" fill="#5a8ad8" stroke="#707070" stroke-width=".5"/></g></g><path d="M1 10h7l-2.500 4.500l2.500 4.500h-7l2.500-4.500z" fill="#c8a040" stroke="#6a5010" stroke-width=".5"/></g>
<path d="M294 8.500h9M294.500 11h8l-4 4.500z" fill="#000" stroke="#000" stroke-width="1"/>
<g transform="translate(7.5 133.7) scale(1)"><path d="M2 6l4 1M1.500 9.500l4 .5M2 13l4-.5" stroke="#9ab" stroke-width="1.200"/><path d="M7.7 11.85l-5 5.500" stroke="#8a8a8a" stroke-width="2.600" stroke-linecap="round"/><path d="M7.7 11.85l-5 5.500" stroke="#d8d8d8" stroke-width="1.200" stroke-linecap="round"/><circle cx="11" cy="8" r="5.5" fill="url(#glens)" stroke="#7a9ac8" stroke-width="1.400"/><path d="M9 5l5 3l-5 3z" fill="#b0c4dc" stroke="#8098b8" stroke-width=".5"/></g>
<g transform="translate(33.5 133.7) scale(1)"><path d="M2 2l14 15M6 1l12 13" stroke="#3a6ae0" stroke-width="1.300" stroke-dasharray="3 1.500"/><path d="M15.500 2.500l2.500 2l-9.500 12l-3.500 1.500l.8-3.700z" fill="#e8a838" stroke="#7a5010" stroke-width=".5"/><path d="M15.500 2.500l2.500 2l-1.300 1.600l-2.500-2z" fill="#e03030"/><path d="M5 18l.8-3.700l2.700 2.200z" fill="#333"/></g>
<path d="M47.5 132.7h6l-3 3.500z" fill="#000"/>
<g transform="translate(7.5 159.7) scale(1)"><rect x="3.500" y="4.500" width="13" height="11" fill="url(#gdoc)" stroke="#555" stroke-width=".8"/><path d="M0.5 1.5l4 4M4.5 1.5l-4 4" stroke="#2aa818" stroke-width="1.300"/><rect x="1.2" y="2.2" width="2.600" height="2.600" fill="#58e030" stroke="#1a8a10" stroke-width=".4"/><path d="M15.5 1.5l4 4M19.5 1.5l-4 4" stroke="#2aa818" stroke-width="1.300"/><rect x="16.2" y="2.2" width="2.600" height="2.600" fill="#58e030" stroke="#1a8a10" stroke-width=".4"/><path d="M0.5 14.5l4 4M4.5 14.5l-4 4" stroke="#2aa818" stroke-width="1.300"/><rect x="1.2" y="15.2" width="2.600" height="2.600" fill="#58e030" stroke="#1a8a10" stroke-width=".4"/><path d="M15.5 14.5l4 4M19.5 14.5l-4 4" stroke="#2aa818" stroke-width="1.300"/><rect x="16.2" y="15.2" width="2.600" height="2.600" fill="#58e030" stroke="#1a8a10" stroke-width=".4"/></g>
<g transform="translate(33.5 159.7) scale(1)"><path d="M3 7a4 4 0 1 1 5 4l6 3a3.500 3.500 0 1 1 -4 3" fill="none" stroke="#3a6ae0" stroke-width="1.500"/><path d="M15.500 2.500l2.500 2l-9.500 12l-3.500 1.500l.8-3.700z" fill="#e8a838" stroke="#7a5010" stroke-width=".5"/><path d="M15.500 2.500l2.500 2l-1.300 1.600l-2.500-2z" fill="#e03030"/><path d="M5 18l.8-3.700l2.700 2.200z" fill="#333"/></g>
<path d="M47.5 158.7h6l-3 3.500z" fill="#000"/>
<g transform="translate(7.5 185.7) scale(1)"><path d="M1 2.500h3.500M2.750 .8v3.400M1 6.300h3.500" stroke="#111" stroke-width=".9"/><path d="M10 11l4.5 -2l4.5 2v6.3l-4.5 2l-4.5 -2z" fill="#5a5a5a" stroke="#2a2a2a" stroke-width=".5"/><path d="M10 11l4.5 2v6.3l-4.5 -2z" fill="#8a8c8a"/><path d="M10 11l4.5 -2l4.5 2l-4.5 2z" fill="#b0b2b0"/><path d="M6.82 10.709999999999999l-5 5.500" stroke="#8a8a8a" stroke-width="2.600" stroke-linecap="round"/><path d="M6.82 10.709999999999999l-5 5.500" stroke="#d8d8d8" stroke-width="1.200" stroke-linecap="round"/><circle cx="10" cy="7" r="5.3" fill="url(#glens)" stroke="#7a9ac8" stroke-width="1.400"/><path d="M8 4l5 3l-5 3z" fill="#b0c4dc" stroke="#8098b8" stroke-width=".5"/></g>
<path d="M21.5 184.7h6l-3 3.500z" fill="#000"/>
<g transform="translate(33.5 185.7) scale(1)"><path d="M2 3h15v6h-3v4h3v5h-15z" fill="none" stroke="#f0e800" stroke-width="1.700"/><path d="M5 10l2-1.500l2.500 3.500l5-8l2 1.200l-6.500 11.300h-1.500z" fill="url(#ggreen)" stroke="#1a8a18" stroke-width=".4"/></g>
<path d="M47.5 184.7h6l-3 3.500z" fill="#000"/>
<g transform="translate(7.5 211.7) scale(1)"><path d="M0 10l10 -6l10 5l-9 9z" fill="#dce6f8" stroke="#a8b8d8" stroke-width=".5"/>
<path d="M5 12V2.500" stroke="#1a6af0" stroke-width="1.600"/><path d="M5 0l2.300 4h-4.600z" fill="#1a6af0"/>
<path d="M5 12L13 6" stroke="#20b030" stroke-width="1.600"/><path d="M15 4.300l-1 4.200l-3.200 -2.800z" fill="#20b030"/>
<path d="M5 12L12 17" stroke="#e02020" stroke-width="1.600"/><path d="M14 19l-4.300 -.8l2.800 -3.200z" fill="#e02020"/>
<circle cx="5" cy="12" r="1.800" fill="#e8e8e8" stroke="#555" stroke-width=".5"/></g>
<path d="M21.5 210.7h6l-3 3.500z" fill="#000"/>
<g transform="translate(33.5 211.7) scale(1)"><path d="M2 8q4-9 7 1t8 2" fill="none" stroke="#3a6ae0" stroke-width="1.600"/><path d="M2 15q6 5 14-2" fill="none" stroke="#3a6ae0" stroke-width="1.300"/><path d="M15.500 2.500l2.500 2l-9.500 12l-3.500 1.500l.8-3.700z" fill="#e8a838" stroke="#7a5010" stroke-width=".5"/><path d="M15.500 2.500l2.500 2l-1.300 1.600l-2.500-2z" fill="#e03030"/><path d="M5 18l.8-3.700l2.700 2.200z" fill="#333"/></g>
<path d="M47.5 210.7h6l-3 3.500z" fill="#000"/>
<g transform="translate(7.5 237.7) scale(1)"><path d="M1.500 .5h9l3.500 2.300h-9zM1.500 3.300h9l3.500 2.300h-9zM1.500 6.100h9l3.500 2.300h-9z" fill="#5a7ae8" stroke="#dfe6ff" stroke-width=".7"/><path d="M3 9.500h10l1.500 1.500h-10z" fill="#d8d8d8" stroke="#888" stroke-width=".4"/>
<ellipse cx="10.500" cy="15" rx="7.500" ry="4.300" fill="#c89a70" stroke="#7a5030" stroke-width=".6"/><circle cx="7" cy="15.500" r="1.700" fill="#2050f0"/><circle cx="11" cy="16.800" r="1.700" fill="#20c020"/><circle cx="14" cy="14" r="1.700" fill="#e02020"/>
<path d="M18.500 1L11 12.500" stroke="#b86020" stroke-width="1.800" stroke-linecap="round"/></g>
<path d="M21.5 236.7h6l-3 3.500z" fill="#000"/>
<g transform="translate(33.5 237.7) scale(1)"><path d="M5 3l14-1.500l-3.500 14l-14.500 2.500z" fill="#4a88e8" stroke="#2050b0" stroke-width=".6"/><path d="M6.500 4.500l5-.6l-1.300 5.500l-5.200.8zM13 3.800l4.500-.6l-1.300 5.300l-4.500.7zM4.600 11.500l5.200-.8l-1.200 5l-5.300 1zM11.300 10.500l4.500-.7l-1.300 5l-4.400.8z" fill="#9cc4fa"/></g>
<path d="M47.5 236.7h6l-3 3.500z" fill="#000"/>
<g transform="translate(7.5 263.7) scale(1)"><path d="M3.5 11a6.5 5.2 0 0 1 11.0 -4.55" fill="none" stroke="#5a8ad8" stroke-width="3.2"/><path d="M12.0 2.1499999999999995l5.500 1.500l-3.500 4.500z" fill="#5a8ad8"/>
<path d="M16.5 10a6.5 5.2 0 0 1 -11.0 4.55" fill="none" stroke="#7aa4e4" stroke-width="3.2"/><path d="M8.0 17.85l-5.500 -1.500l3.500 -4.500z" fill="#7aa4e4"/></g>
<path d="M21.5 262.7h6l-3 3.500z" fill="#000"/>
<g transform="translate(33.5 263.7) scale(1)"><path d="M1.500 5.500l8.500-3.500l8.500 3.500v9l-8.500 4l-8.500-4z" fill="#6a6c6a" stroke="#333" stroke-width=".6"/><path d="M1.500 5.500l8.500 3.500v9.500l-8.500-4z" fill="#9a9c9a"/><path d="M1.500 5.500l8.500-3.500l8.500 3.500l-8.500 3.500z" fill="#c4c6c4"/></g>
<path d="M47.5 262.7h6l-3 3.500z" fill="#000"/>
<g transform="translate(7.5 289.7) scale(1)"><text x="10" y="16" text-anchor="middle" font-family="Liberation Sans,sans-serif" font-weight="bold" font-size="19" fill="#3a6ad0" stroke="#1a3a8a" stroke-width=".4">?</text><ellipse cx="10" cy="18.500" rx="5" ry="1.200" fill="#889" opacity=".5"/></g>
<path d="M21.5 288.7h6l-3 3.500z" fill="#000"/>
<g transform="translate(33.5 289.7) scale(1)"><path d="M2 4v14M18 4v14" stroke="#222" stroke-width="1.100"/><path d="M2 7h16" stroke="#d8d020" stroke-width="1.600"/><path d="M2 7l3.500-2v4zM18 7l-3.500-2v4z" fill="#d8d020" stroke="#666" stroke-width=".3"/></g>
<path d="M47.5 288.7h6l-3 3.500z" fill="#000"/>
<g transform="translate(7.5 315.7) scale(1)"><path d="M4 6h12l-1.500 12.500h-9z" fill="#b8e0f0" stroke="#4a7a9a" stroke-width=".7"/><path d="M7 8l1 9M10 8v9M13 8l-1 9" stroke="#e8e860" stroke-width="1"/><ellipse cx="10" cy="6" rx="6.500" ry="1.800" fill="#6a8aa8" stroke="#345" stroke-width=".6"/><path d="M8 4l2-3l2 3z" fill="#e8c020"/></g>
<path d="M21.5 314.7h6l-3 3.500z" fill="#000"/>
<g transform="translate(33.5 315.7) scale(1)"><g transform=""><path d="M2 8l6.500-6v3.500q9 0 9 7q0 4-5 6q2.500-3 1-5.500q-1.500-2-5-2v3.500z" fill="#9a9a9a" stroke="#707070" stroke-width=".5"/></g></g>
<path d="M47.5 314.7h6l-3 3.500z" fill="#000"/>
<g transform="translate(7.5 341.7) scale(1)"><path d="M2 1v13M4.500 1v13" stroke="#555" stroke-width="1.300"/><path d="M1 15l4 3.500l12-1.500l2-3.500z" fill="#f08020"/><circle cx="11" cy="9" r="5" fill="none" stroke="#e07018" stroke-width="1.400"/><path d="M11 2v14M4 9h14M6 4l10 10M16 4l-10 10" stroke="#e07018" stroke-width="1"/><circle cx="11" cy="9" r="1.600" fill="#f0a040"/></g>
<path d="M21.5 340.7h6l-3 3.500z" fill="#000"/>
<g transform="translate(33.5 341.7) scale(1)"><path d="M1 12V3h4.8999999999999995l1.500 1.500h7.0v2" fill="#f0c860" stroke="#c89a30" stroke-width=".5"/><path d="M1 12l2.8000000000000003 -6.0h11.9l-2.8000000000000003 6.0z" fill="url(#gfold)" stroke="#c89a30" stroke-width=".5"/><path d="M7 4h6v4h-6z" fill="#30a838"/><path d="M4 11h14v8h-14z" fill="#fff" stroke="#222" stroke-width=".9"/></g>
<rect x="64" y="113" width="24" height="24" fill="#7f8498"/>
<g transform="translate(66 115)"><path d="M1.500 4.500h17M1.500 10h17M1.500 15.500h17" stroke="#4a5e88" stroke-width="3.400"/><path d="M2 3.500h16M2 9h16M2 14.500h16" stroke="#7088b8" stroke-width=".6"/></g>
<rect x="92" y="113" width="24" height="24" fill="#7f8498"/>
<g transform="translate(94 115)"><rect x="4" y="4" width="12" height="12" fill="url(#gdoc)" stroke="#ccd" stroke-width=".6"/><path d="M1 1l4 4M5 1l-4 4" stroke="#2aa818" stroke-width="1.300"/><rect x="1.7" y="1.7" width="2.600" height="2.600" fill="#58e030" stroke="#1a8a10" stroke-width=".4"/><path d="M15 1l4 4M19 1l-4 4" stroke="#2aa818" stroke-width="1.300"/><rect x="15.7" y="1.7" width="2.600" height="2.600" fill="#58e030" stroke="#1a8a10" stroke-width=".4"/><path d="M1 15l4 4M5 15l-4 4" stroke="#2aa818" stroke-width="1.300"/><rect x="1.7" y="15.7" width="2.600" height="2.600" fill="#58e030" stroke="#1a8a10" stroke-width=".4"/><path d="M15 15l4 4M19 15l-4 4" stroke="#2aa818" stroke-width="1.300"/><rect x="15.7" y="15.7" width="2.600" height="2.600" fill="#58e030" stroke="#1a8a10" stroke-width=".4"/></g>
<rect x="120" y="113" width="24" height="24" fill="#7f8498"/>
<g transform="translate(122 115)"><path d="M2 6l4 1M1.500 9.500l4 .5M2 13l4-.5" stroke="#b8c4d8" stroke-width="1.200"/><path d="M7.7 11.85l-5 5.500" stroke="#8a8a8a" stroke-width="2.600" stroke-linecap="round"/><path d="M7.7 11.85l-5 5.500" stroke="#d8d8d8" stroke-width="1.200" stroke-linecap="round"/><circle cx="11" cy="8" r="5.5" fill="url(#glens)" stroke="#7a9ac8" stroke-width="1.400"/><path d="M9 5l5 3l-5 3z" fill="#b0c4dc" stroke="#8098b8" stroke-width=".5"/></g>
<rect x="148" y="113" width="24" height="24" fill="#7f8498"/>
<g transform="translate(150 115)"><path d="M2 12l8-5l8 5l-8 6z" fill="none" stroke="#999" stroke-width=".5"/><path d="M9 12V3" stroke="#1a6af0" stroke-width="1.600"/><path d="M9 .5l2.300 4h-4.600z" fill="#1a6af0"/><path d="M9 12L16 7" stroke="#20b030" stroke-width="1.600"/><path d="M18 5.500l-1 4l-3-2.600z" fill="#20b030"/><path d="M9 12L15 17" stroke="#e02020" stroke-width="1.600"/><path d="M17 19l-4.200-.8l2.700-3.100z" fill="#e02020"/><circle cx="9" cy="12" r="1.700" fill="#eee" stroke="#555" stroke-width=".5"/></g>
<rect x="176" y="113" width="24" height="24" fill="#7f8498"/>
<g transform="translate(178 115)"><path d="M10.5 1L10.5 11.5M1.5 14.7L10.5 11.5L19.5 14.3" fill="none" stroke="#050505" stroke-width="1.100"/><polygon points="1.5,4.7 10.5,1 19.5,4.3 10.5,8" fill="url(#ggreen2)" stroke="#1a8a10" stroke-width=".4"/><path d="M1.5 4.7L10.5 1L19.5 4.3L19.5 14.3L10.5 19.2L1.5 14.7zM1.5 4.7L10.5 8L19.5 4.3M10.5 8L10.5 19.2" fill="none" stroke="#050505" stroke-width="1.300"/></g>
<rect x="204" y="113" width="24" height="24" fill="#7f8498"/>
<g transform="translate(206 115)"><polygon points="1.5,14.7 10.5,11.5 19.5,14.3 10.5,19.2" fill="url(#ggreen2)" stroke="#1a8a10" stroke-width=".4"/><path d="M10.5 1L10.5 11.5M1.5 14.7L10.5 11.5L19.5 14.3" fill="none" stroke="#050505" stroke-width="1.100"/><path d="M1.5 4.7L10.5 1L19.5 4.3L19.5 14.3L10.5 19.2L1.5 14.7zM1.5 4.7L10.5 8L19.5 4.3M10.5 8L10.5 19.2" fill="none" stroke="#050505" stroke-width="1.300"/></g>
<rect x="232" y="113" width="24" height="24" fill="#7f8498"/>
<g transform="translate(234 115)"><polygon points="1.5,4.7 10.5,1 10.5,11.5 1.5,14.7" fill="url(#ggreen2)" stroke="#1a8a10" stroke-width=".4"/><path d="M10.5 1L10.5 11.5M1.5 14.7L10.5 11.5L19.5 14.3" fill="none" stroke="#050505" stroke-width="1.100"/><path d="M1.5 4.7L10.5 1L19.5 4.3L19.5 14.3L10.5 19.2L1.5 14.7zM1.5 4.7L10.5 8L19.5 4.3M10.5 8L10.5 19.2" fill="none" stroke="#050505" stroke-width="1.300"/></g>
<rect x="260" y="113" width="24" height="24" fill="#7f8498"/>
<g transform="translate(262 115)"><path d="M10.5 1L10.5 11.5M1.5 14.7L10.5 11.5L19.5 14.3" fill="none" stroke="#050505" stroke-width="1.100"/><polygon points="10.5,8 19.5,4.3 19.5,14.3 10.5,19.2" fill="url(#ggreen2)" stroke="#1a8a10" stroke-width=".4"/><path d="M1.5 4.7L10.5 1L19.5 4.3L19.5 14.3L10.5 19.2L1.5 14.7zM1.5 4.7L10.5 8L19.5 4.3M10.5 8L10.5 19.2" fill="none" stroke="#050505" stroke-width="1.300"/></g>
<rect x="288" y="113" width="24" height="24" fill="#7f8498"/>
<g transform="translate(290 115)"><path d="M10.5 1L10.5 11.5M1.5 14.7L10.5 11.5L19.5 14.3" fill="none" stroke="#050505" stroke-width="1.100"/><polygon points="1.5,4.7 10.5,8 10.5,19.2 1.5,14.7" fill="url(#ggreen2)" stroke="#1a8a10" stroke-width=".4"/><path d="M1.5 4.7L10.5 1L19.5 4.3L19.5 14.3L10.5 19.2L1.5 14.7zM1.5 4.7L10.5 8L19.5 4.3M10.5 8L10.5 19.2" fill="none" stroke="#050505" stroke-width="1.300"/></g>
<rect x="316" y="113" width="24" height="24" fill="#7f8498"/>
<g transform="translate(318 115)"><polygon points="10.5,1 19.5,4.3 19.5,14.3 10.5,11.5" fill="url(#ggreen2)" stroke="#1a8a10" stroke-width=".4"/><path d="M10.5 1L10.5 11.5M1.5 14.7L10.5 11.5L19.5 14.3" fill="none" stroke="#050505" stroke-width="1.100"/><path d="M1.5 4.7L10.5 1L19.5 4.3L19.5 14.3L10.5 19.2L1.5 14.7zM1.5 4.7L10.5 8L19.5 4.3M10.5 8L10.5 19.2" fill="none" stroke="#050505" stroke-width="1.300"/></g>
<rect x="344" y="113" width="24" height="24" fill="#7f8498"/>
<g transform="translate(346 115)"><path d="M1.5 4.7L10.5 1L19.5 4.3L19.5 14.3L10.5 19.2L1.5 14.7z" fill="#38c828"/><path d="M1.5 4.7L10.5 8L10.5 19.2L1.5 14.7z" fill="#4cd838"/><path d="M10.5 8L19.5 4.3L19.5 14.3L10.5 19.2z" fill="#2cb020"/><path d="M1.5 4.7L10.5 1L19.5 4.3L10.5 8z" fill="#7af060"/><path d="M1.5 4.7L10.5 8L19.5 4.3M10.5 8L10.5 19.2" fill="none" stroke="#1a8a10" stroke-width=".8"/></g>
<rect x="64" y="141" width="24" height="24" fill="#7f8498"/>
<g transform="translate(67.5 144)"><path d="M4.700 3.700V15.300A5.300 2.200 0 0 0 15.300 15.300V3.700" fill="none" stroke="#222" stroke-width=".9"/><ellipse cx="10" cy="3.700" rx="5.300" ry="2.200" fill="none" stroke="#222" stroke-width=".9"/><ellipse cx="10" cy="15.300" rx="5.300" ry="2.200" fill="none" stroke="#222" stroke-width=".8"/></g>
<rect x="64" y="169" width="24" height="24" fill="#7f8498"/>
<g transform="translate(67.5 172)"><path d="M4.700 3.700V15.300A5.300 2.200 0 0 0 15.300 15.300V3.700" fill="none" stroke="#222" stroke-width=".9"/><ellipse cx="10" cy="3.700" rx="5.300" ry="2.200" fill="none" stroke="#222" stroke-width=".9"/></g>
<rect x="64.5" y="197.5" width="23" height="23" fill="#9a9560" stroke="#f0cc6a" stroke-width="1"/>
<g transform="translate(67.5 200)"><ellipse cx="13" cy="16.800" rx="6" ry="1.600" fill="#6a6a78" opacity=".45"/><path d="M4.700 3.700V15.300A5.300 2.200 0 0 0 15.300 15.300V3.700z" fill="url(#gcb)" stroke="#1a2a5a" stroke-width=".7"/><ellipse cx="10" cy="3.700" rx="5.300" ry="2.200" fill="#2c4c9c" stroke="#1a2a5a" stroke-width=".7"/></g>
<rect x="64" y="225" width="24" height="24" fill="#7f8498"/>
<g transform="translate(67.5 228)"><ellipse cx="13" cy="16.800" rx="6" ry="1.600" fill="#6a6a78" opacity=".45"/><path d="M4.700 3.700V15.300A5.300 2.200 0 0 0 15.300 15.300V3.700z" fill="url(#gcl)" stroke="#444" stroke-width=".8"/><ellipse cx="10" cy="3.700" rx="5.300" ry="2.200" fill="#d4def2" stroke="#444" stroke-width=".8"/><path d="M4.700 13.500A5.300 2.200 0 0 0 15.300 13.500" fill="none" stroke="#889" stroke-width=".6"/></g>
<rect x="64" y="253" width="24" height="24" fill="#7f8498"/>
<g transform="translate(67.5 256)"><path d="M4.700 3.700V15.300A5.300 2.200 0 0 0 15.300 15.300V3.700" fill="none" stroke="#222" stroke-width=".9"/><ellipse cx="10" cy="3.700" rx="5.300" ry="2.200" fill="none" stroke="#222" stroke-width=".9"/><path d="M6.500 5.500L8 17.300M8 5.800L6 16.500M10 5.900L12 17.400M12 5.800L9.500 17.500M14 5.300L13 17M6.500 5.500L10 17.500M13.500 5.500L11 12L14.500 16" fill="none" stroke="#222" stroke-width=".6"/></g>
</svg>
<svg style="left:0;top:0" width="1920" height="1048" viewBox="0 0 1920 1048">
<g transform="translate(1182 1022) scale(1)"><rect x=".5" y=".5" width="16" height="16" fill="#dfe3ee" stroke="#5e6680" stroke-width="1.200"/><g transform="translate(1.500 1.500) scale(.7)"><path d="M3.5 11a6.5 5.2 0 0 1 11.0 -4.55" fill="none" stroke="#e86070" stroke-width="2.6"/><path d="M12.0 2.1499999999999995l5.500 1.500l-3.500 4.500z" fill="#e86070"/>
<path d="M16.5 10a6.5 5.2 0 0 1 -11.0 4.55" fill="none" stroke="#e87888" stroke-width="2.6"/><path d="M8.0 17.85l-5.500 -1.500l3.500 -4.500z" fill="#e87888"/></g><path d="M6 8.500h5" stroke="#6a9ae0" stroke-width="1.500"/></g>
<g transform="translate(1212 1021.5) scale(1)"><rect x="0" y="0" width="18" height="17.500" fill="#ffe566"/><path d="M6 1l1.500 3.500l4-1.500l-1 4l3.500 1l-3.500 2l1.500 4l-4-2l-2.500 3l-.5-4l-4 .5l3-3l-3-2.500l4-.5z" fill="#c858d8"/><circle cx="6" cy="6" r="2.500" fill="#f8e020"/><path d="M7 7l8.500 6l-3 .5l3 3.500l-1.500 1l-3-3.500l-1.500 2.500z" fill="#f0e4e8" stroke="#8a8a8a" stroke-width=".6"/></g>
<g transform="translate(1245 1022) scale(1)"><rect x="1" y="6" width="9.500" height="10.500" fill="#dfe8fa" stroke="#6a7aa0" stroke-width=".8"/><circle cx="4" cy="13" r="1.600" fill="#3a7ae0"/><circle cx="8" cy="13" r="1.600" fill="#3a7ae0"/><path d="M3 5l5-4l6 .5l1.500 2.500l-3 2.500l-4 0l-2.500 3z" fill="#e8b878" stroke="#a87838" stroke-width=".5"/><path d="M4 4.500l4 5M6 3l4 5M3 7l5-4M5 9l5-4" stroke="#a06030" stroke-width=".5"/></g>
<g transform="translate(1276 1021) scale(1)"><ellipse cx="9" cy="16.500" rx="6" ry="1.500" fill="#667" opacity=".55"/><text x="8" y="15" text-anchor="middle" font-family="Liberation Sans,sans-serif" font-weight="bold" font-size="18" fill="#4a80d8" stroke="#2a4a9a" stroke-width=".4">?</text></g>
<g transform="translate(1304 1021.5) scale(1)"><path d="M3 3.500l4-2l4 2v4.500l-4 2l-4-2z" fill="#4a88e8" stroke="#2a4aa0" stroke-width=".5"/><path d="M3 3.500l4 2l4-2M7 5.500v4.500" stroke="#2a4aa0" stroke-width=".5" fill="none"/><path d="M9 8.500l4.500-2l4.500 2v5l-4.500 2.500l-4.500-2.500z" fill="#4a8a98" stroke="#123" stroke-width=".7"/><path d="M9 8.500l4.500 2l4.500-2M13.500 10.500v5.500" stroke="#123" stroke-width=".7" fill="none"/><path d="M1 11.500h7M5 8.500l3.500 3l-3.500 3.500" stroke="#f01020" stroke-width="1.600" fill="none"/></g>
<g transform="translate(1336 1021.5) scale(1)"><rect x="0" y="0" width="18" height="17.500" fill="#ffe566"/><path d="M2 4.500l7-2.500l7 2.500v8.500l-7 3.500l-7-3.500z" fill="#8ab0a8" stroke="#2a4a9a" stroke-width="1"/><path d="M2 4.500l7 2.500v9.500M9 7l7-2.500" stroke="#2a4a9a" stroke-width="1" fill="none"/><path d="M2 4.500l7-2.500l7 2.500l-7 2.500z" fill="#e030f0" stroke="#a020b0" stroke-width=".5"/></g>
<rect x="1369.500" y="1024.500" width="11" height="12" fill="#e8ecf4" stroke="#5a7a70" stroke-width="1"/>
<path d="M1431 1023v15M1431 1030h14M1438 1023v15" stroke="#4a5a8a" stroke-width="1.200" fill="none"/><rect x="1431" y="1023" width="14" height="15" fill="none" stroke="#4a5a8a" stroke-width="1"/>
<path d="M1337 1003v16M1339 1005v16" stroke="#a8aec0" stroke-width="1" stroke-dasharray="1 3"/>
<path d="M1476 1003v16M1478 1005v16" stroke="#a8aec0" stroke-width="1" stroke-dasharray="1 3"/>
<path d="M1658 1003v16M1660 1005v16" stroke="#a8aec0" stroke-width="1" stroke-dasharray="1 3"/>
<circle cx="1468" cy="1009.500" r="3.600" fill="#eaf2ff" stroke="#3a6ac8" stroke-width="1.300"/><path d="M1465.500 1012.500l-4 4.500" stroke="#3a6ac8" stroke-width="1.600" stroke-linecap="round"/>
<circle cx="1900.500" cy="1009.500" r="6.500" fill="#0808e0" stroke="#123" stroke-width=".6"/><path d="M1896 1006q3-3.500 6-2.500q-1 3-3 4q-3 0-3-1.500zM1902 1010l4-4q1.500 3 0 5.500q-2 .5-4-1.500zM1895 1010q3 0 4 2q-1 2-2.500 1.500q-1.500-1.500-1.500-3.500z" fill="#10c020"/>
<g>
<ellipse cx="1406" cy="1038.500" rx="16" ry="2.200" fill="#b07a50" opacity=".8"/>
<ellipse cx="1398" cy="1034" rx="5" ry="4.500" fill="#fff050"/><ellipse cx="1414" cy="1033" rx="5" ry="4.500" fill="#fff050"/>
<ellipse cx="1406" cy="1025" rx="11.500" ry="10" fill="#fff050"/>
<ellipse cx="1390" cy="1022.500" rx="5.500" ry="3.600" transform="rotate(-25 1390 1022.500)" fill="#fff050"/><ellipse cx="1422.500" cy="1021" rx="5.500" ry="3.600" transform="rotate(30 1422.500 1021)" fill="#fff050"/>
<path d="M1405 975q-1-7-6-8M1407 975q2-6 5-7" stroke="#7a4a1a" stroke-width="2" fill="none" stroke-linecap="round"/><ellipse cx="1400" cy="967" rx="3" ry="2" fill="#7a4a1a"/>
<circle cx="1389" cy="978.500" r="7" fill="#b0722e"/><circle cx="1422.500" cy="978.500" r="7" fill="#b0722e"/><circle cx="1389.500" cy="979" r="3.500" fill="#e8a890"/><circle cx="1422" cy="979" r="3.500" fill="#e8a890"/>
<ellipse cx="1406" cy="996" rx="27" ry="23.500" fill="#b0722e"/>
<path d="M1392 1016q14 8 29 0q-2 6-14.500 6.500q-12 0-14.500-6.500z" fill="#9a6024"/>
<ellipse cx="1407" cy="1000" rx="22" ry="17.500" fill="#fff050"/>
<circle cx="1396" cy="994" r="1.500" fill="#7a4a1a"/><circle cx="1417" cy="993.500" r="1.500" fill="#7a4a1a"/><ellipse cx="1406.500" cy="997" rx="1" ry=".8" fill="#7a4a1a"/>
<ellipse cx="1391" cy="999.700" rx="3.200" ry="2.600" fill="#ffae30"/><ellipse cx="1421.500" cy="999.700" rx="3.200" ry="2.600" fill="#ffae30"/>
<path d="M1413 1018.500l-10 10" stroke="#b0722e" stroke-width="2.400"/>
<circle cx="1391.500" cy="1022" r="2.500" fill="#b0722e"/><circle cx="1401.500" cy="1022.500" r="2.500" fill="#b0722e"/><ellipse cx="1396.500" cy="1028.500" rx="7.500" ry="6.500" fill="#b0722e"/><circle cx="1394" cy="1027.500" r=".8" fill="#7a4a1a"/><circle cx="1399" cy="1027.500" r=".8" fill="#7a4a1a"/><ellipse cx="1392.500" cy="1030" rx="1.300" ry="1" fill="#f080c0"/><ellipse cx="1400.500" cy="1030" rx="1.300" ry="1" fill="#f080c0"/><ellipse cx="1393" cy="1035.500" rx="3" ry="2" fill="#b0722e"/><ellipse cx="1400" cy="1035.500" rx="3" ry="2" fill="#b0722e"/>
<path d="M1436 973l4 15l4.500-9l4.500 9l5-16" fill="none" stroke="#fff8f0" stroke-width="6.200" stroke-linejoin="round" stroke-linecap="round"/><circle cx="1440" cy="982" r="1.300" fill="#c88040"/><circle cx="1449" cy="984" r="1.300" fill="#c88040"/><circle cx="1452" cy="976" r="1.200" fill="#c88040"/><circle cx="1444.500" cy="980" r="1" fill="#c88040"/>
<circle cx="1438.500" cy="992.500" r="3.300" fill="#c08850"/><circle cx="1454.500" cy="992" r="3.300" fill="#c08850"/><ellipse cx="1446.500" cy="1001" rx="10.500" ry="10" fill="#c08850"/><ellipse cx="1446.500" cy="1001.500" rx="4.200" ry="5" fill="#fff4e8"/>
<path d="M1438 1015l4.500 15.500l4.500-10l4.500 9l4-17" fill="none" stroke="#fff050" stroke-width="5.500" stroke-linejoin="round" stroke-linecap="round"/><path d="M1438 1015l4.500 15.500l4.500-10l4.500 9l4-17" fill="none" stroke="#c8a020" stroke-width="7" stroke-linejoin="round" stroke-linecap="round" opacity=".35" transform="translate(1 1)" style="mix-blend-mode:multiply"/><path d="M1438 1015l4.500 15.500l4.500-10l4.500 9l4-17" fill="none" stroke="#fff050" stroke-width="6.500" stroke-linejoin="round" stroke-linecap="round"/>
<circle cx="1367.500" cy="1005.500" r="8.600" fill="#9c6a5c"/><text x="1367.500" y="1010.500" text-anchor="middle" font-family="Liberation Sans,sans-serif" font-size="14" fill="#fff">A</text>
<circle cx="1374.700" cy="1026.500" r="8.600" fill="#9c6a5c"/><path d="M1369.500 1023.500l3-2.300q2.200 1.500 4.400 0l3 2.300l-1.600 2.300l-1.300-.8v6h-4.600v-6l-1.300 .8z" fill="#fff"/>
</g>
</svg>
</body></html>
